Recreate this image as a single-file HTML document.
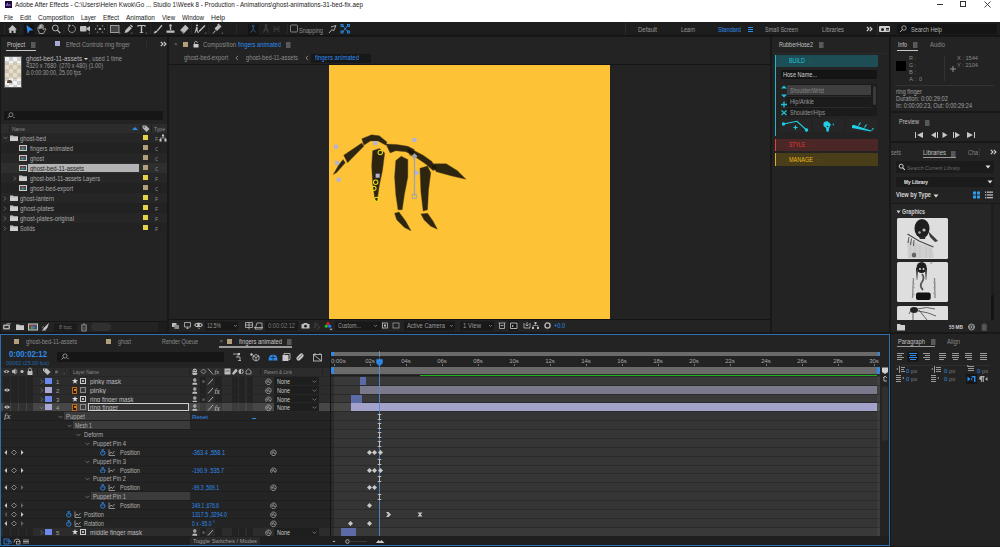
<!DOCTYPE html>
<html><head><meta charset="utf-8">
<style>
*{margin:0;padding:0;box-sizing:border-box}
html,body{width:1000px;height:547px;overflow:hidden;background:#181818;font-family:"Liberation Sans",sans-serif;color:#a8a8a8;font-size:7px}
.a{position:absolute}
.t{position:absolute;white-space:nowrap;line-height:1}
.pn{position:absolute;background:#232323}
.blue{color:#2d8ceb}
</style></head><body>
<!-- title bar -->
<div class="a" style="left:0;top:0;width:1000px;height:22px;background:#fff"></div>
<div class="a" style="left:5px;top:1px;width:7px;height:7px;background:#1f0a3e"></div>
<div class="t" style="left:6px;top:3px;font-size:4px;color:#b69cff">Ae</div>
<div class="t f" style="left:15px;top:1px;width:348px;font-size:7px;color:#1a1a1a">Adobe After Effects - C:\Users\Helen Kwok\Go ... Studio 1\Week 8 - Production - Animations\ghost-animations-31-bed-fix.aep</div>
<div class="a" style="left:937px;top:4px;width:6px;height:1px;background:#333"></div>
<div class="a" style="left:960px;top:1px;width:6px;height:6px;border:1px solid #333"></div>
<svg class="a" style="left:984px;top:1px" width="7" height="7"><path d="M0.5 0.5L6.5 6.5M6.5 0.5L0.5 6.5" stroke="#333" stroke-width="0.9"/></svg>
<div class="t f" style="left:4px;top:13.5px;width:9px;font-size:7px;color:#1a1a1a">File</div>
<div class="t f" style="left:20px;top:13.5px;width:11px;font-size:7px;color:#1a1a1a">Edit</div>
<div class="t f" style="left:38px;top:13.5px;width:36px;font-size:7px;color:#1a1a1a">Composition</div>
<div class="t f" style="left:81px;top:13.5px;width:15px;font-size:7px;color:#1a1a1a">Layer</div>
<div class="t f" style="left:103px;top:13.5px;width:16px;font-size:7px;color:#1a1a1a">Effect</div>
<div class="t f" style="left:126px;top:13.5px;width:29px;font-size:7px;color:#1a1a1a">Animation</div>
<div class="t f" style="left:162px;top:13.5px;width:13px;font-size:7px;color:#1a1a1a">View</div>
<div class="t f" style="left:182px;top:13.5px;width:22px;font-size:7px;color:#1a1a1a">Window</div>
<div class="t f" style="left:211px;top:13.5px;width:14px;font-size:7px;color:#1a1a1a">Help</div>
<!-- toolbar -->
<div class="a" style="left:0;top:22px;width:1000px;height:14px;background:#1d1d1d"></div>
<div class="a" style="left:0;top:35px;width:1000px;height:1px;background:#121212"></div>
<svg class="a" style="left:0;top:22px" width="400" height="14" fill="#bdbdbd" stroke="none">
<g fill="#2e2e2e"><rect x="4" y="2" width="0.7" height="10"/><rect x="20.5" y="2" width="0.7" height="10"/><rect x="63.5" y="2" width="0.7" height="10"/><rect x="107" y="2" width="0.7" height="10"/><rect x="150.5" y="2" width="0.7" height="10"/><rect x="191" y="2" width="0.7" height="10"/><rect x="208.5" y="2" width="0.7" height="10"/><rect x="236" y="2" width="0.7" height="10"/><rect x="287" y="2" width="0.7" height="10"/></g>
<path d="M8 7.5L12.5 3L17 7.5H15.7V11H13.5V8.7H11.5V11H9.3V7.5Z"/>
<rect x="24" y="2" width="10" height="11" fill="#141414"/>
<path d="M26.5 3L33.5 8.2L29.8 8.6L27.6 11.8Z" fill="#2d8ceb"/>
<path d="M38 7.5V5.2Q38.5 4.4 39.3 5.2V7V3.3Q39.8 2.5 40.6 3.3V6.5V2.6Q41.1 1.9 41.9 2.6V6.5V3.2Q42.4 2.5 43.2 3.2V7.8L44.6 6.6Q45.6 6.1 46 7L43.4 11.5H39.5Z" fill="none" stroke="#bdbdbd" stroke-width="0.8"/>
<circle cx="55.3" cy="6" r="2.9" fill="none" stroke="#bdbdbd" stroke-width="0.9"/><path d="M57.3 8.1L60.3 11.1" stroke="#bdbdbd" stroke-width="1.2"/>
<path d="M69.3 4.4A3.6 3.6 0 1 0 72 3.3" fill="none" stroke="#9a9a9a" stroke-width="0.9"/><path d="M68 2.5L71 3L69.3 5.6Z" fill="#9a9a9a"/>
<rect x="80" y="4" width="6.5" height="5.5" rx="1"/><path d="M86.5 6.2L90 4V9.5L86.5 7.3Z"/><path d="M88.5 11.5L89.7 10.3V11.5Z"/>
<g fill="#aaa"><path d="M96.5 3.5H98.5L97.5 4.8Z"/><path d="M101.5 3.5H103.5L102.5 4.8Z"/><path d="M96.5 10.5H98.5L97.5 9.2Z"/><path d="M101.5 10.5H103.5L102.5 9.2Z"/><rect x="98.8" y="6" width="2.4" height="2"/><path d="M95 6L96.5 7L95 8Z"/><path d="M105 6L103.5 7L105 8Z"/></g>
<rect x="110.5" y="3.5" width="8.5" height="7" fill="#444" stroke="#a8a8a8" stroke-width="0.9"/><path d="M119 11.5L120.2 10.3V11.5Z"/>
<path d="M124.5 11L125.5 8L129.5 4L131.8 6.3L127.8 10.3Z"/><path d="M130 3.5L131 2.5L133 4.5L132 5.5Z"/><path d="M131 11.5L132.2 10.3V11.5Z"/>
<path d="M137.5 3H145.5V5H144.8L144.3 4H142.2V10.3H143.3V11H139.7V10.3H140.8V4H138.7L138.2 5H137.5Z"/><path d="M145.5 11.5L146.7 10.3V11.5Z"/>
<path d="M153.5 11.5L154.5 9.5L156.5 8.5L157.5 9.5L156 11Z"/><path d="M156.8 8.2L161.5 2.8L162.5 3.8L157.8 9.2Z"/>
<circle cx="170.5" cy="3.5" r="1.3"/><rect x="169.8" y="4.5" width="1.4" height="3.5"/><path d="M166.5 8.5H174.5V10.8H166.5Z"/>
<path d="M180 8.2L185.3 2.8L188.8 6.3L183.5 11.7Z"/><path d="M180.8 8.3L183.4 10.9" stroke="#1e1e1e" stroke-width="0.6"/>
<circle cx="197" cy="3.5" r="1.1"/><path d="M196 5L198 5.5L197.5 8L199 11H197.8L196.3 8.5L195.3 11H194.5L195.5 7.5Z"/><path d="M198.5 9L204.5 3L205.5 4L199.5 10Z"/><path d="M205 11.5L206.2 10.3V11.5Z"/>
<path d="M213 11.5L215.5 8.5" stroke="#bdbdbd" stroke-width="1"/><path d="M214.5 6.5L218 3L220.5 5.5L217 9Z"/><path d="M217.3 2.5L218.5 1.5L221.5 4.5L220.5 5.7Z"/><path d="M221.5 11.5L222.7 10.3V11.5Z"/>
<rect x="248" y="2" width="10.5" height="11" fill="#141414"/>
<g fill="none" stroke="#2f5f90" stroke-width="0.9"><circle cx="253.2" cy="4" r="1"/><path d="M253.2 5V8L250.2 10.5M253.2 8L256.2 10.5"/></g>
<g fill="none" stroke="#474747" stroke-width="0.9"><circle cx="266" cy="3.3" r="0.9"/><path d="M266 4.2L263.5 10.5M266 4.2L268.5 10.5M264.5 8H267.5"/><path d="M273.5 4L279.5 10M273.5 10L279.5 4M273 7H275M278 7H280"/></g>
<rect x="290.5" y="3" width="7" height="7" rx="1" fill="none" stroke="#8a8a8a" stroke-width="0.9"/>
<path d="M329 11L332 7.5L333.5 9L336 3.5L331 5" fill="none" stroke="#bdbdbd" stroke-width="0.9"/>
<g fill="none" stroke="#2d8ceb" stroke-width="0.9"><path d="M342.5 3.5L348 10M348 3.5L342.5 10"/><rect x="341" y="2.5" width="2" height="2"/><rect x="347.5" y="2.5" width="2" height="2"/><rect x="341" y="9" width="2" height="2"/><rect x="347.5" y="9" width="2" height="2"/></g>
</svg>
<div class="t f" style="left:299px;top:26.5px;width:24px;font-size:7px;color:#8f8f8f">Snapping</div>
<div class="a" style="left:625px;top:23px;width:1px;height:12px;background:#2c2c2c"></div>
<div class="t f" style="left:638px;top:26.5px;width:19px;font-size:6.5px;color:#9a9a9a">Default</div>
<div class="t f" style="left:681px;top:26.5px;width:14px;font-size:6.5px;color:#9a9a9a">Learn</div>
<div class="t f" style="left:718px;top:26.5px;width:23px;font-size:6.5px;color:#2d8ceb">Standard</div>
<div class="a" style="left:748px;top:27px;width:5px;height:1px;background:#2d8ceb;box-shadow:0 2px 0 #2d8ceb,0 4px 0 #2d8ceb"></div>
<div class="t f" style="left:765px;top:26.5px;width:33px;font-size:6.5px;color:#9a9a9a">Small Screen</div>
<div class="t f" style="left:822px;top:26.5px;width:22px;font-size:6.5px;color:#9a9a9a">Libraries</div>
<svg class="a" style="left:866px;top:26px" width="7" height="6"><path d="M0.8 0.8L3 3L0.8 5.2M3.8 0.8L6 3L3.8 5.2" fill="none" stroke="#d8d8d8" stroke-width="1.1"/></svg>
<div class="a" style="left:877px;top:23px;width:1px;height:12px;background:#2c2c2c"></div>
<div class="a" style="left:879px;top:26px;width:11px;height:6px;background:#cfcfcf;border-radius:1px"></div>
<div class="a" style="left:881px;top:27.5px;width:3px;height:3px;background:#1d1d1d;border-radius:50%"></div>
<div class="a" style="left:886px;top:28px;width:3px;height:1px;background:#1d1d1d;box-shadow:0 1.5px 0 #1d1d1d"></div>
<div class="a" style="left:897px;top:24px;width:100px;height:10px;background:#141414;border-radius:1px"></div>
<svg class="a" style="left:899px;top:25px" width="8" height="8"><circle cx="5" cy="3" r="2.2" fill="none" stroke="#bbb" stroke-width="0.8"/><path d="M3.5 4.5L1 7" stroke="#bbb" stroke-width="0.9"/></svg>
<div class="t f" style="left:911px;top:26.5px;width:31px;font-size:6.5px;color:#b5b5b5">Search Help</div>
<!-- panels -->
<div class="pn" style="left:1px;top:37px;width:166px;height:295px"></div>
<div class="pn" style="left:169px;top:37px;width:601px;height:295px"></div>
<div class="pn" style="left:772px;top:37px;width:117px;height:295px"></div>
<div class="pn" style="left:891px;top:37px;width:109px;height:74px"></div>
<div class="pn" style="left:891px;top:113px;width:109px;height:28px"></div>
<div class="pn" style="left:891px;top:143px;width:109px;height:189px"></div>
<div class="pn" style="left:0;top:334px;width:890px;height:212px;border:1px solid #2f6fb0"></div>
<div class="pn" style="left:891px;top:334px;width:109px;height:212px"></div>

<!-- project panel -->
<div class="t f" style="left:7px;top:41.5px;width:18px;font-size:6.5px;color:#c8c8c8">Project</div>
<svg class="a" style="left:31px;top:41.5px" width="5" height="6"><path d="M0 1H4.5M0 3H4.5M0 5H4.5" stroke="#aaa" stroke-width="0.8"/></svg>
<div class="a" style="left:6px;top:50px;width:30px;height:1px;background:#c8c8c8"></div>
<div class="a" style="left:55px;top:41px;width:5px;height:5px;background:#a9a9d6"></div>
<div class="t f" style="left:66px;top:41.5px;width:64px;font-size:6.5px;color:#8c8c8c">Effect Controls ring finger</div>
<div class="a" style="left:146px;top:40px;width:1px;height:9px;background:#2e2e2e"></div>
<svg class="a" style="left:160px;top:41px" width="7" height="6"><path d="M0.8 0.8L3 3L0.8 5.2M3.8 0.8L6 3L3.8 5.2" fill="none" stroke="#d0d0d0" stroke-width="1.1"/></svg>
<div class="a" style="left:4px;top:56px;width:18px;height:32px;background-color:#f2f2f2;background-image:linear-gradient(45deg,#cfcfcf 25%,transparent 25%,transparent 75%,#cfcfcf 75%),linear-gradient(45deg,#cfcfcf 25%,transparent 25%,transparent 75%,#cfcfcf 75%);background-size:8px 8px;background-position:0 0,4px 4px;border:1px solid #555"></div>
<div class="a" style="left:5px;top:63px;width:16px;height:16px;background:rgba(200,170,110,0.3)"></div>
<div class="a" style="left:7px;top:80px;width:5px;height:3px;background:#5a4a33;border-radius:2px 2px 0 0"></div>
<div class="t f" style="left:26px;top:56px;width:56px;font-size:6.5px;color:#bcbcbc">ghost-bed-11-assets</div>
<div class="a" style="left:84px;top:58px;width:0;height:0;border-left:2px solid transparent;border-right:2px solid transparent;border-top:2.5px solid #ddd"></div>
<div class="t f" style="left:89px;top:56px;width:33px;font-size:6.5px;color:#9a9a9a">, used 1 time</div>
<div class="t f" style="left:26px;top:63px;width:77px;font-size:6.5px;color:#9a9a9a">4320 x 7680&nbsp;&nbsp;(270 x 480) (1.00)</div>
<div class="t f" style="left:26px;top:70px;width:55px;font-size:6.5px;color:#9a9a9a">&Delta; 0:00:30:00, 25.00 fps</div>
<div class="a" style="left:4px;top:111px;width:159px;height:9px;background:#161616;border-radius:1px"></div>
<svg class="a" style="left:6px;top:112px" width="10" height="7"><circle cx="5" cy="2.7" r="2" fill="none" stroke="#aaa" stroke-width="0.7"/><path d="M3.6 4.1L1.5 6.2" stroke="#aaa" stroke-width="0.8"/><path d="M7 5L9 5L8 6Z" fill="#aaa"/></svg>
<div class="a" style="left:1px;top:124px;width:166px;height:9px;background:#2c2c2c"></div>
<div class="a" style="left:9px;top:125px;width:1px;height:7px;background:#1e1e1e"></div>
<div class="t f" style="left:12px;top:126px;width:13px;font-size:6px;color:#8a8a8a">Name</div>
<div class="a" style="left:132px;top:127px;width:0;height:0;border-left:3px solid transparent;border-right:3px solid transparent;border-bottom:3px solid #2d8ceb"></div>
<div class="a" style="left:140px;top:125px;width:1px;height:7px;background:#1e1e1e"></div>
<svg class="a" style="left:142px;top:125px" width="8" height="7"><path d="M0.5 0.5H4L7.5 4L4.5 7L0.5 3Z" fill="#b5b5b5"/><circle cx="2.2" cy="2" r="0.7" fill="#2c2c2c"/></svg>
<div class="a" style="left:151px;top:125px;width:1px;height:7px;background:#1e1e1e"></div>
<div class="t f" style="left:154px;top:126px;width:11px;font-size:6px;color:#8a8a8a">Type</div>
<div class="a" style="left:1px;top:133px;width:166px;height:10px;background:#262626"></div>
<svg class="a" style="left:3px;top:136px" width="5" height="4"><path d="M0.5 0.8L2.5 2.8L4.5 0.8" fill="none" stroke="#888" stroke-width="0.7"/></svg>
<svg class="a" style="left:10px;top:135px" width="8" height="6"><path d="M0 0.5H3L3.8 1.3H8V6H0Z" fill="#cfcfcf"/><path d="M0 1.8H8" stroke="#9a9a9a" stroke-width="0.4"/></svg>
<div class="t f" style="left:20px;top:135.5px;width:26px;font-size:6.5px;color:#a9a9a9">ghost-bed</div>
<div class="a" style="left:143px;top:135px;width:5px;height:5px;background:#e3d34a"></div>
<div class="a" style="left:155px;top:135.5px;width:3px;height:7px;overflow:hidden"><div class="t" style="left:0;top:0;font-size:6px;color:#888">F</div></div>
<div class="a" style="left:1px;top:143px;width:166px;height:10px;background:#222222"></div>
<svg class="a" style="left:19px;top:145px" width="8" height="6"><rect x="0" y="0" width="8" height="6" fill="#c9c9c9"/><rect x="1" y="1" width="6" height="4" fill="#4a4a4a"/><circle cx="3.4" cy="2.6" r="1.1" fill="#d03030"/><circle cx="4.8" cy="3.4" r="1.1" fill="#3070e0"/><circle cx="3.2" cy="3.8" r="1" fill="#30b040"/></svg>
<div class="t f" style="left:30px;top:145.5px;width:43px;font-size:6.5px;color:#a9a9a9">fingers animated</div>
<div class="a" style="left:143px;top:145px;width:5px;height:5px;background:#b39f7c"></div>
<div class="a" style="left:155px;top:145.5px;width:3px;height:7px;overflow:hidden"><div class="t" style="left:0;top:0;font-size:6px;color:#888">C</div></div>
<div class="a" style="left:1px;top:153px;width:166px;height:10px;background:#262626"></div>
<svg class="a" style="left:19px;top:155px" width="8" height="6"><rect x="0" y="0" width="8" height="6" fill="#c9c9c9"/><rect x="1" y="1" width="6" height="4" fill="#4a4a4a"/><circle cx="3.4" cy="2.6" r="1.1" fill="#d03030"/><circle cx="4.8" cy="3.4" r="1.1" fill="#3070e0"/><circle cx="3.2" cy="3.8" r="1" fill="#30b040"/></svg>
<div class="t f" style="left:30px;top:155.5px;width:14px;font-size:6.5px;color:#a9a9a9">ghost</div>
<div class="a" style="left:143px;top:155px;width:5px;height:5px;background:#b39f7c"></div>
<div class="a" style="left:155px;top:155.5px;width:3px;height:7px;overflow:hidden"><div class="t" style="left:0;top:0;font-size:6px;color:#888">C</div></div>
<div class="a" style="left:1px;top:163px;width:166px;height:10px;background:#2e2e2e"></div>
<svg class="a" style="left:19px;top:165px" width="8" height="6"><rect x="0" y="0" width="8" height="6" fill="#c9c9c9"/><rect x="1" y="1" width="6" height="4" fill="#4a4a4a"/><circle cx="3.4" cy="2.6" r="1.1" fill="#d03030"/><circle cx="4.8" cy="3.4" r="1.1" fill="#3070e0"/><circle cx="3.2" cy="3.8" r="1" fill="#30b040"/></svg>
<div class="a" style="left:28px;top:164px;width:111px;height:8px;background:#b3b3b3"></div>
<div class="t f" style="left:30px;top:165.5px;width:54px;font-size:6.5px;color:#1a1a1a">ghost-bed-11-assets</div>
<div class="a" style="left:143px;top:165px;width:5px;height:5px;background:#b39f7c"></div>
<div class="a" style="left:155px;top:165.5px;width:3px;height:7px;overflow:hidden"><div class="t" style="left:0;top:0;font-size:6px;color:#888">C</div></div>
<div class="a" style="left:1px;top:173px;width:166px;height:10px;background:#262626"></div>
<svg class="a" style="left:13px;top:176px" width="4" height="5"><path d="M0.8 0.5L2.8 2.5L0.8 4.5" fill="none" stroke="#888" stroke-width="0.7"/></svg>
<svg class="a" style="left:19px;top:175px" width="8" height="6"><path d="M0 0.5H3L3.8 1.3H8V6H0Z" fill="#cfcfcf"/><path d="M0 1.8H8" stroke="#9a9a9a" stroke-width="0.4"/></svg>
<div class="t f" style="left:30px;top:175.5px;width:70px;font-size:6.5px;color:#a9a9a9">ghost-bed-11-assets Layers</div>
<div class="a" style="left:143px;top:175px;width:5px;height:5px;background:#e3d34a"></div>
<div class="a" style="left:155px;top:175.5px;width:3px;height:7px;overflow:hidden"><div class="t" style="left:0;top:0;font-size:6px;color:#888">F</div></div>
<div class="a" style="left:1px;top:183px;width:166px;height:10px;background:#222222"></div>
<svg class="a" style="left:19px;top:185px" width="8" height="6"><rect x="0" y="0" width="8" height="6" fill="#c9c9c9"/><rect x="1" y="1" width="6" height="4" fill="#4a4a4a"/><circle cx="3.4" cy="2.6" r="1.1" fill="#d03030"/><circle cx="4.8" cy="3.4" r="1.1" fill="#3070e0"/><circle cx="3.2" cy="3.8" r="1" fill="#30b040"/></svg>
<div class="t f" style="left:30px;top:185.5px;width:43px;font-size:6.5px;color:#a9a9a9">ghost-bed-export</div>
<div class="a" style="left:143px;top:185px;width:5px;height:5px;background:#b39f7c"></div>
<div class="a" style="left:155px;top:185.5px;width:3px;height:7px;overflow:hidden"><div class="t" style="left:0;top:0;font-size:6px;color:#888">C</div></div>
<div class="a" style="left:1px;top:193px;width:166px;height:10px;background:#262626"></div>
<svg class="a" style="left:3px;top:196px" width="4" height="5"><path d="M0.8 0.5L2.8 2.5L0.8 4.5" fill="none" stroke="#888" stroke-width="0.7"/></svg>
<svg class="a" style="left:10px;top:195px" width="8" height="6"><path d="M0 0.5H3L3.8 1.3H8V6H0Z" fill="#cfcfcf"/><path d="M0 1.8H8" stroke="#9a9a9a" stroke-width="0.4"/></svg>
<div class="t f" style="left:20px;top:195.5px;width:34px;font-size:6.5px;color:#a9a9a9">ghost-lantern</div>
<div class="a" style="left:143px;top:195px;width:5px;height:5px;background:#e3d34a"></div>
<div class="a" style="left:155px;top:195.5px;width:3px;height:7px;overflow:hidden"><div class="t" style="left:0;top:0;font-size:6px;color:#888">F</div></div>
<div class="a" style="left:1px;top:203px;width:166px;height:10px;background:#222222"></div>
<svg class="a" style="left:3px;top:206px" width="4" height="5"><path d="M0.8 0.5L2.8 2.5L0.8 4.5" fill="none" stroke="#888" stroke-width="0.7"/></svg>
<svg class="a" style="left:10px;top:205px" width="8" height="6"><path d="M0 0.5H3L3.8 1.3H8V6H0Z" fill="#cfcfcf"/><path d="M0 1.8H8" stroke="#9a9a9a" stroke-width="0.4"/></svg>
<div class="t f" style="left:20px;top:205.5px;width:34px;font-size:6.5px;color:#a9a9a9">ghost-plates</div>
<div class="a" style="left:143px;top:205px;width:5px;height:5px;background:#e3d34a"></div>
<div class="a" style="left:155px;top:205.5px;width:3px;height:7px;overflow:hidden"><div class="t" style="left:0;top:0;font-size:6px;color:#888">F</div></div>
<div class="a" style="left:1px;top:213px;width:166px;height:10px;background:#262626"></div>
<svg class="a" style="left:3px;top:216px" width="4" height="5"><path d="M0.8 0.5L2.8 2.5L0.8 4.5" fill="none" stroke="#888" stroke-width="0.7"/></svg>
<svg class="a" style="left:10px;top:215px" width="8" height="6"><path d="M0 0.5H3L3.8 1.3H8V6H0Z" fill="#cfcfcf"/><path d="M0 1.8H8" stroke="#9a9a9a" stroke-width="0.4"/></svg>
<div class="t f" style="left:20px;top:215.5px;width:54px;font-size:6.5px;color:#a9a9a9">ghost-plates-original</div>
<div class="a" style="left:143px;top:215px;width:5px;height:5px;background:#e3d34a"></div>
<div class="a" style="left:155px;top:215.5px;width:3px;height:7px;overflow:hidden"><div class="t" style="left:0;top:0;font-size:6px;color:#888">F</div></div>
<div class="a" style="left:1px;top:223px;width:166px;height:10px;background:#222222"></div>
<svg class="a" style="left:3px;top:226px" width="4" height="5"><path d="M0.8 0.5L2.8 2.5L0.8 4.5" fill="none" stroke="#888" stroke-width="0.7"/></svg>
<svg class="a" style="left:10px;top:225px" width="8" height="6"><path d="M0 0.5H3L3.8 1.3H8V6H0Z" fill="#cfcfcf"/><path d="M0 1.8H8" stroke="#9a9a9a" stroke-width="0.4"/></svg>
<div class="t f" style="left:20px;top:225.5px;width:15px;font-size:6.5px;color:#a9a9a9">Solids</div>
<div class="a" style="left:143px;top:225px;width:5px;height:5px;background:#e3d34a"></div>
<div class="a" style="left:155px;top:225.5px;width:3px;height:7px;overflow:hidden"><div class="t" style="left:0;top:0;font-size:6px;color:#888">F</div></div>
<svg class="a" style="left:159px;top:134px" width="8" height="8"><rect x="3" y="0.5" width="2" height="2" fill="#ccc"/><rect x="0.5" y="5" width="2" height="2.5" fill="#ccc"/><rect x="5.5" y="5" width="2" height="2.5" fill="#ccc"/><path d="M4 2.5V4M1.5 5V4H6.5V5" stroke="#ccc" stroke-width="0.6" fill="none"/></svg>
<div class="a" style="left:1px;top:321px;width:166px;height:1px;background:#151515"></div>
<svg class="a" style="left:0;top:322px" width="170" height="10"><rect x="3" y="2.5" width="7" height="5" rx="1" fill="#aaa"/><rect x="4.5" y="4" width="4" height="2" fill="#333"/><path d="M6 2.5Q8 0.5 11 2" stroke="#aaa" fill="none" stroke-width="0.8"/><path d="M16 2.5H19L20 3.3H24V8H16Z" fill="#c9c9c9"/><rect x="28" y="1.5" width="10" height="7" fill="#c9c9c9"/><rect x="29" y="2.5" width="8" height="5" fill="#505050"/><circle cx="32" cy="4.3" r="1.3" fill="#d03030"/><circle cx="34" cy="5.2" r="1.3" fill="#3070e0"/><circle cx="31.8" cy="6" r="1.2" fill="#30b040"/><path d="M42.5 8.5L44 6L48.5 1.5L47 6L44.5 8Z M44 4.5L42 5.5M46 7L45 9" fill="#c9c9c9" stroke="#c9c9c9" stroke-width="0.5"/><rect x="54" y="1.5" width="23" height="8" fill="#1b1b1b"/><path d="M81 3H87M83 2H85M81.8 3.5V9H86.2V3.5" stroke="#aaa" fill="none" stroke-width="0.8"/><path d="M83 4.5V8M85 4.5V8" stroke="#aaa" stroke-width="0.5"/><rect x="91" y="1" width="20" height="8" rx="4" fill="#303030"/><rect x="158" y="0" width="9" height="10" fill="#1d1d1d"/></svg>
<div class="t f" style="left:59px;top:325px;width:13px;font-size:5.5px;color:#777">8 bpc</div>
<!-- comp yellow -->
<div class="a" style="left:329px;top:65px;width:281px;height:254px;background:#fec236"></div>
<!-- comp panel -->
<div class="t" style="left:174px;top:41px;font-size:6px;color:#777">&times;</div>
<div class="a" style="left:183px;top:42px;width:5px;height:5px;background:#b39f7c"></div>
<svg class="a" style="left:193px;top:41px" width="6" height="7"><path d="M1.5 3V1.8Q1.5 0.5 3 0.5Q4.5 0.5 4.5 1.8" fill="none" stroke="#ccc" stroke-width="0.7"/><rect x="0.5" y="3" width="5" height="3.5" fill="#ccc"/></svg>
<div class="t f" style="left:203px;top:41.5px;width:33px;font-size:6.5px;color:#8c8c8c">Composition</div>
<div class="t f" style="left:238px;top:41.5px;width:43px;font-size:6.5px;color:#2d8ceb">fingers animated</div>
<svg class="a" style="left:286px;top:41.5px" width="5" height="6"><path d="M0 1H4.5M0 3H4.5M0 5H4.5" stroke="#aaa" stroke-width="0.8"/></svg>
<div class="t f" style="left:184px;top:55px;width:44px;font-size:6.5px;color:#8c8c8c">ghost-bed-export</div>
<svg class="a" style="left:235px;top:55px" width="4" height="6"><path d="M3 0.8L1 3L3 5.2" fill="none" stroke="#9a9a9a" stroke-width="0.8"/></svg>
<div class="t f" style="left:246px;top:55px;width:52px;font-size:6.5px;color:#8c8c8c">ghost-bed-11-assets</div>
<svg class="a" style="left:305px;top:55px" width="4" height="6"><path d="M3 0.8L1 3L3 5.2" fill="none" stroke="#9a9a9a" stroke-width="0.8"/></svg>
<div class="a" style="left:311px;top:54px;width:60px;height:9px;background:#181818"></div>
<div class="t f" style="left:315px;top:55px;width:44px;font-size:6.5px;color:#2d8ceb">fingers animated</div>
<div class="a" style="left:169px;top:64px;width:601px;height:1px;background:#151515"></div>
<svg class="a" style="left:330px;top:125px" width="140" height="110" viewBox="0 0 696 547">
<defs><filter id="bl" x="-5%" y="-5%" width="110%" height="110%"><feGaussianBlur stdDeviation="2.5"/></filter></defs>
<g fill="#2e2511" stroke="#5a4519" stroke-width="4" stroke-opacity="0.5" stroke-linejoin="round">
<path d="M16 246L43 199L65 172L76 188L32 237Z"/>
<path d="M68 150L158 90L168 106L87 188Z"/>
<path d="M158 68L207 49L245 54L283 84L278 101L239 79L201 79L168 101Z"/>
<path d="M278 95L332 97L387 106L419 122L414 150L376 133L327 128L299 139Z"/>
<path d="M408 122L463 150L507 182L528 221L512 226L474 193L419 155Z"/>
<path d="M507 193L578 193L632 226L676 270L605 253L528 232Z"/>
<path d="M212 128L245 117L272 139L261 226L245 302L234 379L223 368L212 292L207 204Z"/>
<path d="M327 177L354 155L387 172L387 259L370 346L359 422L338 422L327 346L321 259Z"/>
<path d="M321 439L343 433L376 477L403 526L370 510L332 472Z"/>
<path d="M447 215L485 204L501 237L490 324L485 422L463 428L452 335Z"/>
<path d="M452 442L485 439L512 477L534 518L501 504L468 472Z"/>
</g>
<g fill="#0e0a04" opacity="0.6"><path d="M385 118L420 130L412 158L395 150Z"/><path d="M505 195L525 205L532 222L510 215Z"/></g>
<g fill="#b3b3d9"><rect x="20" y="98" width="20" height="20"/><rect x="25" y="178" width="20" height="20"/><rect x="33" y="262" width="20" height="20"/><rect x="215" y="80" width="20" height="20"/><rect x="227" y="242" width="20" height="20"/><rect x="410" y="65" width="20" height="20"/><rect x="420" y="228" width="20" height="20"/></g>
<path d="M420 155V352" stroke="#a5a5a5" stroke-width="7"/>
<path d="M420 140L435 155L420 170L405 155Z" fill="#a5a5a5"/>
<rect x="409" y="345" width="20" height="20" fill="none" stroke="#a5a5a5" stroke-width="5"/>
<g fill="none" stroke="#e4e414" stroke-width="5"><circle cx="250" cy="137" r="11"/><circle cx="227" cy="285" r="11"/><circle cx="218" cy="315" r="11"/><circle cx="232" cy="370" r="11"/></g>
<g fill="#33270f"><circle cx="250" cy="137" r="4"/></g>
</svg>
<div class="a" style="left:169px;top:319px;width:601px;height:1px;background:#141414"></div>
<svg class="a" style="left:169px;top:320px" width="601" height="12">
<g fill="#bdbdbd" stroke="none">
<rect x="3" y="3" width="4.5" height="4" fill="#bdbdbd"/><rect x="5.5" y="5" width="4.5" height="4" fill="#8a8a8a"/>
<path d="M15.5 2.5H21.5V7H15.5Z M17.5 8.5H19.5M18.5 7V8.5" fill="none" stroke="#bdbdbd" stroke-width="0.8"/>
<path d="M25.5 4Q29.5 1.5 33.5 4V6Q29.5 8.5 25.5 6Z"/><circle cx="27.5" cy="5" r="0.9" fill="#1f1f1f"/><circle cx="31.5" cy="5" r="0.9" fill="#1f1f1f"/><path d="M29 8L30 9L31 8Z"/>
<rect x="36" y="1.5" width="33" height="9" fill="#181818"/>
<path d="M65 5L66.5 6.5L68 5" fill="none" stroke="#999" stroke-width="0.7"/>
<path d="M76.5 2.5H83.5V7.5H76.5Z M80 2.5V7.5M76.5 5H83.5" fill="none" stroke="#bdbdbd" stroke-width="0.8"/><path d="M79 8.5L80 9.5L81 8.5Z"/>
<path d="M86 9L88 3H93V9Z M85 7.5H94" fill="none" stroke="#bdbdbd" stroke-width="0.8"/>
<rect x="96" y="1.5" width="33" height="9" fill="#181818"/>
<path d="M132.5 4H134L135 3H138L139 4H140.5V8.5H132.5Z"/><circle cx="136.5" cy="6.2" r="1.4" fill="#1f1f1f"/>
<path d="M145 8L149 3.5M146 5.5Q145 3 147.5 3M148.5 8.5Q151 8.5 150 6" fill="none" stroke="#4c4c4c" stroke-width="0.9"/>
<circle cx="159" cy="3.6" r="1.6" fill="#e02020"/><circle cx="157.3" cy="6.2" r="1.6" fill="#20c020"/><circle cx="160.7" cy="6.2" r="1.6" fill="#3070ff"/><path d="M160.5 8.8L162 10.2L163.5 8.8Z" fill="#ccc"/>
<rect x="166" y="1.5" width="46" height="9" fill="#181818"/>
<path d="M205 5L206.5 6.5L208 5" fill="none" stroke="#999" stroke-width="0.7"/>
<rect x="213.5" y="3" width="5" height="5" fill="none" stroke="#bdbdbd" stroke-width="0.8"/><rect x="215" y="4.5" width="2" height="2"/>
<rect x="224" y="3" width="6" height="5" fill="none" stroke="#9a9a9a" stroke-width="0.8"/>
<rect x="235" y="1.5" width="51" height="9" fill="#181818"/>
<path d="M281 5L282.5 6.5L284 5" fill="none" stroke="#999" stroke-width="0.7"/>
<rect x="291" y="1.5" width="34" height="9" fill="#181818"/>
<path d="M320 5L321.5 6.5L323 5" fill="none" stroke="#999" stroke-width="0.7"/>
<path d="M329.5 3H336.5M330.5 3V8.5H335.5V3M331.5 5.5H334.5" fill="none" stroke="#bdbdbd" stroke-width="0.8"/>
<rect x="340" y="1" width="9" height="10" fill="#161616"/>
<path d="M341.5 3H348V8.5H341.5Z" fill="none" stroke="#d0d0d0" stroke-width="0.8"/><path d="M343 5L345 6L343 7Z" fill="#d0d0d0"/>
<path d="M355 3V8H361V3M358 2V6M356.5 4.5L358 6L359.5 4.5" fill="none" stroke="#bdbdbd" stroke-width="0.8"/>
<rect x="365.5" y="2" width="2" height="2"/><rect x="363" y="7" width="2" height="2"/><rect x="368" y="7" width="2" height="2"/><path d="M366.5 4V5.5M364 7V5.5H369V7" fill="none" stroke="#bdbdbd" stroke-width="0.6"/>
<circle cx="378.5" cy="5.5" r="2.6" fill="none" stroke="#bdbdbd" stroke-width="1.3"/>
</g></svg>
<div class="t f" style="left:207px;top:323px;width:14px;font-size:6.5px;color:#9a9a9a">12.5%</div>
<div class="t f" style="left:268px;top:323px;width:27px;font-size:6.5px;color:#7a7a7a">0:00:02:12</div>
<div class="t f" style="left:338px;top:323px;width:23px;font-size:6.5px;color:#9a9a9a">Custom...</div>
<div class="t f" style="left:407px;top:323px;width:38px;font-size:6.5px;color:#9a9a9a">Active Camera</div>
<div class="t f" style="left:463px;top:323px;width:18px;font-size:6.5px;color:#9a9a9a">1 View</div>
<div class="t f" style="left:554px;top:323px;width:11px;font-size:6.5px;color:#2d8ceb">+0.0</div>

<!-- timeline -->
<div class="a" style="left:14px;top:339px;width:5px;height:5px;background:#b39f7c"></div>
<div class="t f" style="left:26px;top:338.5px;width:51px;font-size:6.5px;color:#8a8a8a">ghost-bed-11-assets</div>
<div class="a" style="left:106px;top:339px;width:5px;height:5px;background:#b39f7c"></div>
<div class="t f" style="left:118px;top:338.5px;width:13px;font-size:6.5px;color:#8a8a8a">ghost</div>
<div class="t f" style="left:162px;top:338.5px;width:36px;font-size:6.5px;color:#8a8a8a">Render Queue</div>
<div class="t" style="left:219.5px;top:338px;font-size:6px;color:#888">&times;</div>
<div class="a" style="left:227px;top:339px;width:5px;height:5px;background:#b39f7c"></div>
<div class="t f" style="left:239px;top:338.5px;width:43px;font-size:6.5px;color:#c8c8c8">fingers animated</div>
<svg class="a" style="left:287px;top:338.5px" width="5" height="6"><path d="M0 1H4.5M0 3H4.5M0 5H4.5" stroke="#aaa" stroke-width="0.8"/></svg>
<div class="a" style="left:219px;top:346px;width:73px;height:1.5px;background:#9a9a9a"></div>
<div class="t f" style="left:9px;top:349px;width:38px;font-size:9.5px;color:#2d8ceb;font-weight:bold">0:00:02:12</div>
<div class="t f" style="left:6px;top:359.5px;width:43px;font-size:6px;color:#2268b0">00062 (25.00 fps)</div>
<div class="a" style="left:57px;top:352px;width:167px;height:10px;background:#161616"></div>
<svg class="a" style="left:60px;top:353px" width="10" height="8"><circle cx="5" cy="3" r="2.1" fill="none" stroke="#bbb" stroke-width="0.7"/><path d="M3.5 4.5L1.5 6.5" stroke="#bbb" stroke-width="0.8"/><path d="M7 5.3H9L8 6.3Z" fill="#bbb"/></svg>
<svg class="a" style="left:230px;top:351px" width="100" height="12" fill="none" stroke="#c8c8c8" stroke-width="0.8">
<path d="M3 3H8M8 3V6M6 6H10M10 6V9.5M8 9.5H11"/><rect x="8" y="2" width="2" height="2" fill="#c8c8c8" stroke="none"/>
<path d="M23 5L26 3.5L29 5V8.5L26 10L23 8.5Z M23 5L26 6.5L29 5M26 6.5V10"/><circle cx="21.5" cy="3.5" r="1.2" fill="#c8c8c8" stroke="none"/>
<path d="M38.5 9.5Q38.5 3.5 43 3.5Q47.5 3.5 47.5 9.5Z" fill="#2d8ceb" stroke="none"/><path d="M43 3.5V9.5M40.5 6.5H45.5" stroke="#1a1a1a" stroke-width="0.7"/>
<rect x="52.5" y="4" width="6" height="6" fill="#c8c8c8" stroke="none"/><path d="M54 4V2.5H60V8.5H58.5" />
<path d="M67 9Q65.5 7.5 67 6L70 3Q71.5 1.5 73 3Q74.5 4.5 73 6L70 9Q68.5 10.5 67 9Z" fill="#c8c8c8" stroke="none"/><path d="M67.5 8L72.5 3.5" stroke="#1a1a1a" stroke-width="0.6"/>
<rect x="83.5" y="3.5" width="8" height="6.5"/><path d="M83.5 3.5L91.5 10M85 2V3.5M90 2V3.5"/>
</svg>
<div class="a" style="left:1px;top:367.5px;width:888px;height:8.5px;background:#2c2c2c"></div>
<svg class="a" style="left:0;top:367px" width="330" height="9" fill="#bdbdbd">
<path d="M3.5 4.5Q6.5 1.5 9.5 4.5Q6.5 7.5 3.5 4.5Z"/><circle cx="6.5" cy="4.5" r="1" fill="#2c2c2c"/>
<path d="M12 3.3H13.3L15.5 1.5V7.5L13.3 5.7H12Z"/><path d="M16.3 2.5Q17.5 4.5 16.3 6.5" fill="none" stroke="#bdbdbd" stroke-width="0.6"/>
<circle cx="22" cy="4.5" r="1.6"/>
<path d="M28.5 4V2.8Q28.5 1 30 1Q31.5 1 31.5 2.8V4" fill="none" stroke="#bdbdbd" stroke-width="0.7"/><rect x="27.5" y="4" width="5" height="4"/>
<rect x="37" y="1.5" width="0.7" height="6" fill="#1b1b1b"/>
<path d="M43 1.5H47L50.5 5L47.5 8L43 3.5Z"/><circle cx="44.5" cy="2.8" r="0.6" fill="#2c2c2c"/>
<rect x="53" y="1.5" width="0.7" height="6" fill="#1b1b1b"/>
<text x="55" y="6.5" font-size="5" fill="#888" font-family="Liberation Sans">#</text>
<rect x="63.5" y="6" width="1.2" height="0.7" fill="#888"/>
<rect x="70" y="1.5" width="0.7" height="6" fill="#1b1b1b"/>
<rect x="189" y="1.5" width="0.7" height="6" fill="#1b1b1b"/>
<g transform="translate(192,1)"><path d="M0.5 3Q0.5 0.5 2.8 0.5Q5 0.5 5 3V4.5H0.5Z M0 5H5.5L4.5 7H1Z"/><circle cx="2" cy="2.5" r="0.6" fill="#2c2c2c"/><circle cx="3.5" cy="2.5" r="0.6" fill="#2c2c2c"/></g>
<path d="M203.5 2L206 4.5L203.5 7L201 4.5Z" fill="none" stroke="#bdbdbd" stroke-width="0.7"/>
<path d="M208 1.5L213 7.5" stroke="#bdbdbd" stroke-width="0.8"/>
<text x="214.5" y="7" font-size="6.5" font-style="italic" fill="#bdbdbd" font-family="Liberation Serif">fx</text>
<rect x="224.5" y="1.5" width="6" height="6" fill="#bdbdbd"/><path d="M225.5 4H229.5" stroke="#2c2c2c" stroke-width="0.6"/>
<path d="M232 6.5L235 2.5Q236 1.5 237 2.5Q238 3.5 237 4.5L234 7.5Q233 8 232 6.5Z" fill="#bdbdbd"/>
<circle cx="241" cy="4.5" r="2.5"/><path d="M241 2L243 4.5L241 7Z" fill="#2c2c2c"/>
<path d="M246 4L248.5 2L251 4V7H246Z" fill="none" stroke="#bdbdbd" stroke-width="0.7"/>
<rect x="260" y="1.5" width="0.7" height="6" fill="#1b1b1b"/>
<rect x="322" y="1.5" width="0.7" height="6" fill="#1b1b1b"/>
</svg>
<div class="t f" style="left:73px;top:369.5px;width:26px;font-size:5.5px;color:#8a8a8a">Layer Name</div>
<div class="t f" style="left:264px;top:369.5px;width:28px;font-size:5.5px;color:#8a8a8a">Parent &amp; Link</div>
<div class="a" style="left:1px;top:377px;width:329px;height:8px;background:#2c2c2c"></div>
<div class="a" style="left:334px;top:377px;width:546px;height:8px;background:#393939"></div>
<div class="a" style="left:331px;top:377px;width:3px;height:8px;background:#2e2e2e"></div>
<div class="a" style="left:3px;top:377px;width:7px;height:8px;background:#232323"></div>
<div class="a" style="left:11px;top:377px;width:7px;height:8px;background:#232323"></div>
<div class="a" style="left:19px;top:377px;width:7px;height:8px;background:#232323"></div>
<div class="a" style="left:27px;top:377px;width:6px;height:8px;background:#232323"></div>
<div class="a" style="left:231.5px;top:377px;width:6px;height:8px;background:#222222"></div>
<div class="a" style="left:238.5px;top:377px;width:6.5px;height:8px;background:#222222"></div>
<div class="a" style="left:247px;top:377px;width:5.5px;height:8px;background:#222222"></div>
<div class="a" style="left:200px;top:377px;width:6px;height:8px;background:#222222"></div>
<div class="a" style="left:215px;top:377px;width:7px;height:8px;background:#222222"></div>
<svg class="a" style="left:40px;top:379px" width="4" height="5"><path d="M0.8 0.5L2.8 2.5L0.8 4.5" fill="none" stroke="#888" stroke-width="0.7"/></svg>
<div class="a" style="left:45px;top:378px;width:7px;height:6px;background:#6d88e8"></div>
<div class="t" style="left:56px;top:379.3px;font-size:6px;color:#a0a0a0">1</div>
<svg class="a" style="left:72px;top:378px" width="6" height="6"><path d="M3 0L3.8 2.1H6L4.2 3.5L4.9 5.8L3 4.4L1.1 5.8L1.8 3.5L0 2.1H2.2Z" fill="#d8d8d8"/></svg>
<div class="a" style="left:80px;top:378px;width:6px;height:6px;border:0.8px solid #cfcfcf"></div><div class="a" style="left:82px;top:380px;width:2px;height:2px;background:#ddd;border-radius:50%"></div>
<div class="t f" style="left:90px;top:379.3px;width:31px;font-size:6.5px;color:#bdbdbd">pinky mask</div>
<svg class="a" style="left:192px;top:378px" width="30" height="7" fill="#bdbdbd"><circle cx="2.8" cy="2" r="1.7"/><path d="M0.3 6.8Q0.5 3.8 2.8 3.8Q5.1 3.8 5.3 6.8Z"/><rect x="0" y="4.3" width="5.6" height="0.7" fill="#2b2b2b"/><circle cx="2.2" cy="1.9" r="0.45" fill="#2b2b2b"/><circle cx="3.4" cy="1.9" r="0.45" fill="#2b2b2b"/><circle cx="11.5" cy="3.5" r="1.5" fill="#555"/><path d="M16 6.5L21 1" stroke="#ccc" stroke-width="0.8"/></svg>
<svg class="a" style="left:265px;top:378px" width="7" height="7"><path d="M5.5 5.8A2.8 2.8 0 1 1 6.3 3.5Q6.3 5 5 5Q4 5 4 3.8A0.9 0.9 0 1 0 3 4.5" fill="none" stroke="#bbb" stroke-width="0.7"/></svg>
<div class="a" style="left:274px;top:377px;width:45px;height:8px;background:#1e1e1e"></div>
<div class="t f" style="left:277px;top:378.6px;width:13px;font-size:6.5px;color:#c8c8c8">None</div>
<svg class="a" style="left:312px;top:380px" width="5" height="3"><path d="M0.5 0.7L2.5 2.3L4.5 0.7" fill="none" stroke="#999" stroke-width="0.6"/></svg>
<div class="a" style="left:1px;top:376px;width:329px;height:1px;background:#262626"></div>
<div class="a" style="left:334px;top:376px;width:546px;height:1px;background:#2a2a2a"></div>
<div class="a" style="left:1px;top:386px;width:329px;height:8px;background:#2c2c2c"></div>
<div class="a" style="left:334px;top:386px;width:546px;height:8px;background:#393939"></div>
<div class="a" style="left:331px;top:386px;width:3px;height:8px;background:#2e2e2e"></div>
<div class="a" style="left:3px;top:386px;width:7px;height:8px;background:#232323"></div>
<div class="a" style="left:11px;top:386px;width:7px;height:8px;background:#232323"></div>
<div class="a" style="left:19px;top:386px;width:7px;height:8px;background:#232323"></div>
<div class="a" style="left:27px;top:386px;width:6px;height:8px;background:#232323"></div>
<div class="a" style="left:231.5px;top:386px;width:6px;height:8px;background:#222222"></div>
<div class="a" style="left:238.5px;top:386px;width:6.5px;height:8px;background:#222222"></div>
<div class="a" style="left:247px;top:386px;width:5.5px;height:8px;background:#222222"></div>
<div class="a" style="left:200px;top:386px;width:6px;height:8px;background:#222222"></div>
<div class="a" style="left:215px;top:386px;width:7px;height:8px;background:#222222"></div>
<svg class="a" style="left:4px;top:388px" width="6" height="4"><path d="M0 2Q3 -1 6 2Q3 5 0 2Z" fill="#c8c8c8"/><circle cx="3" cy="2" r="0.8" fill="#333"/></svg>
<svg class="a" style="left:40px;top:388px" width="4" height="5"><path d="M0.8 0.5L2.8 2.5L0.8 4.5" fill="none" stroke="#888" stroke-width="0.7"/></svg>
<div class="a" style="left:45px;top:387px;width:7px;height:6px;background:#a9a9d6"></div>
<div class="t" style="left:56px;top:388.3px;font-size:6px;color:#a0a0a0">2</div>
<div class="a" style="left:72px;top:387px;width:5px;height:7px;background:#c46a12"></div><div class="a" style="left:73px;top:388px;width:3px;height:5px;background:#2a1a0a"></div><div class="a" style="left:73.5px;top:388.5px;width:2px;height:2px;background:#e08020"></div>
<div class="a" style="left:80px;top:387px;width:6px;height:6px;border:0.8px solid #8a8a8a;background:#3a3a3a"></div>
<div class="t f" style="left:90px;top:388.3px;width:16px;font-size:6.5px;color:#bdbdbd">pinky</div>
<svg class="a" style="left:192px;top:387px" width="30" height="7" fill="#bdbdbd"><circle cx="2.8" cy="2" r="1.7"/><path d="M0.3 6.8Q0.5 3.8 2.8 3.8Q5.1 3.8 5.3 6.8Z"/><rect x="0" y="4.3" width="5.6" height="0.7" fill="#2b2b2b"/><circle cx="2.2" cy="1.9" r="0.45" fill="#2b2b2b"/><circle cx="3.4" cy="1.9" r="0.45" fill="#2b2b2b"/><path d="M16 6.5L21 1" stroke="#ccc" stroke-width="0.8"/><text x="22.5" y="6.8" font-size="7.5" font-style="italic" fill="#c8c8c8" font-family="Liberation Serif">fx</text></svg>
<svg class="a" style="left:265px;top:387px" width="7" height="7"><path d="M5.5 5.8A2.8 2.8 0 1 1 6.3 3.5Q6.3 5 5 5Q4 5 4 3.8A0.9 0.9 0 1 0 3 4.5" fill="none" stroke="#bbb" stroke-width="0.7"/></svg>
<div class="a" style="left:274px;top:386px;width:45px;height:8px;background:#1e1e1e"></div>
<div class="t f" style="left:277px;top:387.6px;width:13px;font-size:6.5px;color:#c8c8c8">None</div>
<svg class="a" style="left:312px;top:389px" width="5" height="3"><path d="M0.5 0.7L2.5 2.3L4.5 0.7" fill="none" stroke="#999" stroke-width="0.6"/></svg>
<div class="a" style="left:1px;top:385px;width:329px;height:1px;background:#262626"></div>
<div class="a" style="left:334px;top:385px;width:546px;height:1px;background:#2a2a2a"></div>
<div class="a" style="left:1px;top:395px;width:329px;height:7px;background:#2c2c2c"></div>
<div class="a" style="left:334px;top:395px;width:546px;height:7px;background:#393939"></div>
<div class="a" style="left:331px;top:395px;width:3px;height:7px;background:#2e2e2e"></div>
<div class="a" style="left:3px;top:395px;width:7px;height:8px;background:#232323"></div>
<div class="a" style="left:11px;top:395px;width:7px;height:8px;background:#232323"></div>
<div class="a" style="left:19px;top:395px;width:7px;height:8px;background:#232323"></div>
<div class="a" style="left:27px;top:395px;width:6px;height:8px;background:#232323"></div>
<div class="a" style="left:231.5px;top:395px;width:6px;height:7px;background:#222222"></div>
<div class="a" style="left:238.5px;top:395px;width:6.5px;height:7px;background:#222222"></div>
<div class="a" style="left:247px;top:395px;width:5.5px;height:7px;background:#222222"></div>
<div class="a" style="left:200px;top:395px;width:6px;height:7px;background:#222222"></div>
<div class="a" style="left:215px;top:395px;width:7px;height:7px;background:#222222"></div>
<svg class="a" style="left:40px;top:397px" width="4" height="5"><path d="M0.8 0.5L2.8 2.5L0.8 4.5" fill="none" stroke="#888" stroke-width="0.7"/></svg>
<div class="a" style="left:45px;top:396px;width:7px;height:6px;background:#6d88e8"></div>
<div class="t" style="left:56px;top:397.3px;font-size:6px;color:#a0a0a0">3</div>
<svg class="a" style="left:72px;top:396px" width="6" height="6"><path d="M3 0L3.8 2.1H6L4.2 3.5L4.9 5.8L3 4.4L1.1 5.8L1.8 3.5L0 2.1H2.2Z" fill="#d8d8d8"/></svg>
<div class="a" style="left:80px;top:396px;width:6px;height:6px;border:0.8px solid #cfcfcf"></div><div class="a" style="left:82px;top:398px;width:2px;height:2px;background:#ddd;border-radius:50%"></div>
<div class="t f" style="left:90px;top:397.3px;width:43.5px;font-size:6.5px;color:#bdbdbd">ring finger mask</div>
<svg class="a" style="left:192px;top:396px" width="30" height="7" fill="#bdbdbd"><circle cx="2.8" cy="2" r="1.7"/><path d="M0.3 6.8Q0.5 3.8 2.8 3.8Q5.1 3.8 5.3 6.8Z"/><rect x="0" y="4.3" width="5.6" height="0.7" fill="#2b2b2b"/><circle cx="2.2" cy="1.9" r="0.45" fill="#2b2b2b"/><circle cx="3.4" cy="1.9" r="0.45" fill="#2b2b2b"/><circle cx="11.5" cy="3.5" r="1.5" fill="#555"/><path d="M16 6.5L21 1" stroke="#ccc" stroke-width="0.8"/></svg>
<svg class="a" style="left:265px;top:396px" width="7" height="7"><path d="M5.5 5.8A2.8 2.8 0 1 1 6.3 3.5Q6.3 5 5 5Q4 5 4 3.8A0.9 0.9 0 1 0 3 4.5" fill="none" stroke="#bbb" stroke-width="0.7"/></svg>
<div class="a" style="left:274px;top:395px;width:45px;height:7px;background:#1e1e1e"></div>
<div class="t f" style="left:277px;top:396.6px;width:13px;font-size:6.5px;color:#c8c8c8">None</div>
<svg class="a" style="left:312px;top:398px" width="5" height="3"><path d="M0.5 0.7L2.5 2.3L4.5 0.7" fill="none" stroke="#999" stroke-width="0.6"/></svg>
<div class="a" style="left:1px;top:394px;width:329px;height:1px;background:#262626"></div>
<div class="a" style="left:334px;top:394px;width:546px;height:1px;background:#2a2a2a"></div>
<div class="a" style="left:1px;top:403px;width:329px;height:8px;background:#474747"></div>
<div class="a" style="left:334px;top:403px;width:546px;height:8px;background:#474747"></div>
<div class="a" style="left:331px;top:403px;width:3px;height:8px;background:#3a3a3a"></div>
<div class="a" style="left:3px;top:403px;width:7px;height:8px;background:#313131"></div>
<div class="a" style="left:11px;top:403px;width:7px;height:8px;background:#313131"></div>
<div class="a" style="left:19px;top:403px;width:7px;height:8px;background:#313131"></div>
<div class="a" style="left:27px;top:403px;width:6px;height:8px;background:#313131"></div>
<div class="a" style="left:231.5px;top:403px;width:6px;height:8px;background:#3c3c3c"></div>
<div class="a" style="left:238.5px;top:403px;width:6.5px;height:8px;background:#3c3c3c"></div>
<div class="a" style="left:247px;top:403px;width:5.5px;height:8px;background:#3c3c3c"></div>
<div class="a" style="left:200px;top:403px;width:6px;height:8px;background:#3c3c3c"></div>
<div class="a" style="left:215px;top:403px;width:7px;height:8px;background:#3c3c3c"></div>
<svg class="a" style="left:4px;top:405px" width="6" height="4"><path d="M0 2Q3 -1 6 2Q3 5 0 2Z" fill="#c8c8c8"/><circle cx="3" cy="2" r="0.8" fill="#333"/></svg>
<svg class="a" style="left:39px;top:406px" width="5" height="4"><path d="M0.5 0.8L2.5 2.8L4.5 0.8" fill="none" stroke="#888" stroke-width="0.7"/></svg>
<div class="a" style="left:45px;top:404px;width:7px;height:6px;background:#a9a9d6"></div>
<div class="t" style="left:56px;top:405.3px;font-size:6px;color:#a0a0a0">4</div>
<div class="a" style="left:72px;top:404px;width:5px;height:7px;background:#c46a12"></div><div class="a" style="left:73px;top:405px;width:3px;height:5px;background:#2a1a0a"></div><div class="a" style="left:73.5px;top:405.5px;width:2px;height:2px;background:#e08020"></div>
<div class="a" style="left:80px;top:404px;width:6px;height:6px;border:0.8px solid #8a8a8a;background:#3a3a3a"></div>
<div class="a" style="left:88px;top:403px;width:101px;height:8px;border:0.8px solid #d0d0d0;background:#333"></div>
<div class="t f" style="left:90px;top:405.3px;width:28px;font-size:6.5px;color:#bdbdbd">ring finger</div>
<svg class="a" style="left:192px;top:404px" width="30" height="7" fill="#bdbdbd"><circle cx="2.8" cy="2" r="1.7"/><path d="M0.3 6.8Q0.5 3.8 2.8 3.8Q5.1 3.8 5.3 6.8Z"/><rect x="0" y="4.3" width="5.6" height="0.7" fill="#2b2b2b"/><circle cx="2.2" cy="1.9" r="0.45" fill="#2b2b2b"/><circle cx="3.4" cy="1.9" r="0.45" fill="#2b2b2b"/><path d="M16 6.5L21 1" stroke="#ccc" stroke-width="0.8"/><text x="22.5" y="6.8" font-size="7.5" font-style="italic" fill="#c8c8c8" font-family="Liberation Serif">fx</text></svg>
<svg class="a" style="left:265px;top:404px" width="7" height="7"><path d="M5.5 5.8A2.8 2.8 0 1 1 6.3 3.5Q6.3 5 5 5Q4 5 4 3.8A0.9 0.9 0 1 0 3 4.5" fill="none" stroke="#bbb" stroke-width="0.7"/></svg>
<div class="a" style="left:274px;top:403px;width:45px;height:8px;background:#1e1e1e"></div>
<div class="t f" style="left:277px;top:404.6px;width:13px;font-size:6.5px;color:#c8c8c8">None</div>
<svg class="a" style="left:312px;top:406px" width="5" height="3"><path d="M0.5 0.7L2.5 2.3L4.5 0.7" fill="none" stroke="#999" stroke-width="0.6"/></svg>
<div class="a" style="left:1px;top:402px;width:329px;height:1px;background:#262626"></div>
<div class="a" style="left:334px;top:402px;width:546px;height:1px;background:#2a2a2a"></div>
<div class="a" style="left:1px;top:412px;width:329px;height:8px;background:#242424"></div>
<div class="a" style="left:334px;top:412px;width:546px;height:8px;background:#353535"></div>
<div class="a" style="left:331px;top:412px;width:3px;height:8px;background:#2a2a2a"></div>
<div class="a" style="left:64px;top:412px;width:126px;height:8px;background:#3b3b3b"></div>
<svg class="a" style="left:57.5px;top:415px" width="5" height="4"><path d="M0.5 0.8L2.5 2.8L4.5 0.8" fill="none" stroke="#888" stroke-width="0.7"/></svg>
<div class="t f" style="left:3.5px;top:412.5px;width:6.5px;font-size:8px;font-style:italic;color:#c0c0c0;font-family:'Liberation Serif',serif">fx</div>
<div class="t f" style="left:192px;top:414.3px;width:16px;font-size:6px;color:#2d8ceb">Reset</div>
<div class="a" style="left:252px;top:418px;width:4px;height:0.8px;background:#2d8ceb"></div>
<div class="t f" style="left:66px;top:414.3px;width:19px;font-size:6.5px;color:#b0b0b0">Puppet</div>
<div class="a" style="left:1px;top:411px;width:329px;height:1px;background:#262626"></div>
<div class="a" style="left:334px;top:411px;width:546px;height:1px;background:#2a2a2a"></div>
<div class="a" style="left:1px;top:421px;width:329px;height:8px;background:#242424"></div>
<div class="a" style="left:334px;top:421px;width:546px;height:8px;background:#353535"></div>
<div class="a" style="left:331px;top:421px;width:3px;height:8px;background:#2a2a2a"></div>
<div class="a" style="left:73px;top:421px;width:117px;height:8px;background:#3b3b3b"></div>
<svg class="a" style="left:66.5px;top:424px" width="5" height="4"><path d="M0.5 0.8L2.5 2.8L4.5 0.8" fill="none" stroke="#888" stroke-width="0.7"/></svg>
<div class="t f" style="left:75px;top:423.3px;width:17px;font-size:6.5px;color:#b0b0b0">Mesh 1</div>
<div class="a" style="left:1px;top:420px;width:329px;height:1px;background:#1e1e1e"></div>
<div class="a" style="left:334px;top:420px;width:546px;height:1px;background:#2a2a2a"></div>
<div class="a" style="left:1px;top:430px;width:329px;height:8px;background:#242424"></div>
<div class="a" style="left:334px;top:430px;width:546px;height:8px;background:#353535"></div>
<div class="a" style="left:331px;top:430px;width:3px;height:8px;background:#2a2a2a"></div>
<svg class="a" style="left:75.5px;top:433px" width="5" height="4"><path d="M0.5 0.8L2.5 2.8L4.5 0.8" fill="none" stroke="#888" stroke-width="0.7"/></svg>
<div class="t f" style="left:83.5px;top:432.3px;width:19px;font-size:6.5px;color:#b0b0b0">Deform</div>
<div class="a" style="left:1px;top:429px;width:329px;height:1px;background:#1e1e1e"></div>
<div class="a" style="left:334px;top:429px;width:546px;height:1px;background:#2a2a2a"></div>
<div class="a" style="left:1px;top:439px;width:329px;height:8px;background:#242424"></div>
<div class="a" style="left:334px;top:439px;width:546px;height:8px;background:#353535"></div>
<div class="a" style="left:331px;top:439px;width:3px;height:8px;background:#2a2a2a"></div>
<svg class="a" style="left:85px;top:442px" width="5" height="4"><path d="M0.5 0.8L2.5 2.8L4.5 0.8" fill="none" stroke="#888" stroke-width="0.7"/></svg>
<div class="t f" style="left:92.5px;top:441.3px;width:33px;font-size:6.5px;color:#b0b0b0">Puppet Pin 4</div>
<div class="a" style="left:1px;top:438px;width:329px;height:1px;background:#1e1e1e"></div>
<div class="a" style="left:334px;top:438px;width:546px;height:1px;background:#2a2a2a"></div>
<div class="a" style="left:1px;top:448px;width:329px;height:8px;background:#242424"></div>
<div class="a" style="left:334px;top:448px;width:546px;height:8px;background:#353535"></div>
<div class="a" style="left:331px;top:448px;width:3px;height:8px;background:#2a2a2a"></div>
<svg class="a" style="left:100px;top:449px" width="16" height="7"><circle cx="2.8" cy="4" r="2.2" fill="none" stroke="#2d8ceb" stroke-width="0.9"/><path d="M2.8 0.5V2M2.8 4V2.5M1.5 0.6H4" stroke="#2d8ceb" stroke-width="0.7"/><path d="M9 0.5V6.5H15M9.5 5L11 3L12.5 4.5L14.5 2" fill="none" stroke="#bbb" stroke-width="0.7"/></svg>
<svg class="a" style="left:4px;top:449px" width="22" height="7"><path d="M3 1L0.5 3.5L3 6Z" fill="#c8c8c8"/><path d="M10 1L12.5 3.5L10 6L7.5 3.5Z" fill="none" stroke="#aaa" stroke-width="0.7"/><path d="M17 1L19.5 3.5L17 6Z" fill="#c8c8c8"/></svg>
<svg class="a" style="left:270px;top:449px" width="7" height="7"><path d="M5.5 5.8A2.8 2.8 0 1 1 6.3 3.5Q6.3 5 5 5Q4 5 4 3.8A0.9 0.9 0 1 0 3 4.5" fill="none" stroke="#bbb" stroke-width="0.7"/></svg>
<div class="t f" style="left:192px;top:450.3px;width:33px;font-size:6.5px;color:#2d8ceb">-363.4 ,558.1</div>
<div class="t f" style="left:120px;top:450.3px;width:20px;font-size:6.5px;color:#b0b0b0">Position</div>
<div class="a" style="left:1px;top:447px;width:329px;height:1px;background:#1e1e1e"></div>
<div class="a" style="left:334px;top:447px;width:546px;height:1px;background:#2a2a2a"></div>
<div class="a" style="left:1px;top:457px;width:329px;height:8px;background:#242424"></div>
<div class="a" style="left:334px;top:457px;width:546px;height:8px;background:#353535"></div>
<div class="a" style="left:331px;top:457px;width:3px;height:8px;background:#2a2a2a"></div>
<svg class="a" style="left:85px;top:460px" width="5" height="4"><path d="M0.5 0.8L2.5 2.8L4.5 0.8" fill="none" stroke="#888" stroke-width="0.7"/></svg>
<div class="t f" style="left:92.5px;top:459.3px;width:33px;font-size:6.5px;color:#b0b0b0">Puppet Pin 3</div>
<div class="a" style="left:1px;top:456px;width:329px;height:1px;background:#1e1e1e"></div>
<div class="a" style="left:334px;top:456px;width:546px;height:1px;background:#2a2a2a"></div>
<div class="a" style="left:1px;top:466px;width:329px;height:7px;background:#242424"></div>
<div class="a" style="left:334px;top:466px;width:546px;height:7px;background:#353535"></div>
<div class="a" style="left:331px;top:466px;width:3px;height:7px;background:#2a2a2a"></div>
<svg class="a" style="left:100px;top:467px" width="16" height="7"><circle cx="2.8" cy="4" r="2.2" fill="none" stroke="#2d8ceb" stroke-width="0.9"/><path d="M2.8 0.5V2M2.8 4V2.5M1.5 0.6H4" stroke="#2d8ceb" stroke-width="0.7"/><path d="M9 0.5V6.5H15M9.5 5L11 3L12.5 4.5L14.5 2" fill="none" stroke="#bbb" stroke-width="0.7"/></svg>
<svg class="a" style="left:4px;top:467px" width="22" height="7"><path d="M3 1L0.5 3.5L3 6Z" fill="#c8c8c8"/><path d="M10 1L12.5 3.5L10 6L7.5 3.5Z" fill="none" stroke="#aaa" stroke-width="0.7"/><path d="M17 1L19.5 3.5L17 6Z" fill="#c8c8c8"/></svg>
<svg class="a" style="left:270px;top:467px" width="7" height="7"><path d="M5.5 5.8A2.8 2.8 0 1 1 6.3 3.5Q6.3 5 5 5Q4 5 4 3.8A0.9 0.9 0 1 0 3 4.5" fill="none" stroke="#bbb" stroke-width="0.7"/></svg>
<div class="t f" style="left:192px;top:468.3px;width:32px;font-size:6.5px;color:#2d8ceb">-190.9 ,535.7</div>
<div class="t f" style="left:120px;top:468.3px;width:20px;font-size:6.5px;color:#b0b0b0">Position</div>
<div class="a" style="left:1px;top:465px;width:329px;height:1px;background:#1e1e1e"></div>
<div class="a" style="left:334px;top:465px;width:546px;height:1px;background:#2a2a2a"></div>
<div class="a" style="left:1px;top:474px;width:329px;height:8px;background:#242424"></div>
<div class="a" style="left:334px;top:474px;width:546px;height:8px;background:#353535"></div>
<div class="a" style="left:331px;top:474px;width:3px;height:8px;background:#2a2a2a"></div>
<svg class="a" style="left:85px;top:477px" width="5" height="4"><path d="M0.5 0.8L2.5 2.8L4.5 0.8" fill="none" stroke="#888" stroke-width="0.7"/></svg>
<div class="t f" style="left:92.5px;top:476.3px;width:33px;font-size:6.5px;color:#b0b0b0">Puppet Pin 2</div>
<div class="a" style="left:1px;top:473px;width:329px;height:1px;background:#1e1e1e"></div>
<div class="a" style="left:334px;top:473px;width:546px;height:1px;background:#2a2a2a"></div>
<div class="a" style="left:1px;top:483px;width:329px;height:8px;background:#242424"></div>
<div class="a" style="left:334px;top:483px;width:546px;height:8px;background:#353535"></div>
<div class="a" style="left:331px;top:483px;width:3px;height:8px;background:#2a2a2a"></div>
<svg class="a" style="left:100px;top:484px" width="16" height="7"><circle cx="2.8" cy="4" r="2.2" fill="none" stroke="#2d8ceb" stroke-width="0.9"/><path d="M2.8 0.5V2M2.8 4V2.5M1.5 0.6H4" stroke="#2d8ceb" stroke-width="0.7"/><path d="M9 0.5V6.5H15M9.5 5L11 3L12.5 4.5L14.5 2" fill="none" stroke="#bbb" stroke-width="0.7"/></svg>
<svg class="a" style="left:4px;top:484px" width="22" height="7"><path d="M3 1L0.5 3.5L3 6Z" fill="#c8c8c8"/><path d="M10 1L12.5 3.5L10 6L7.5 3.5Z" fill="none" stroke="#aaa" stroke-width="0.7"/><path d="M17 1L19.5 3.5L17 6Z" fill="#666"/></svg>
<svg class="a" style="left:270px;top:484px" width="7" height="7"><path d="M5.5 5.8A2.8 2.8 0 1 1 6.3 3.5Q6.3 5 5 5Q4 5 4 3.8A0.9 0.9 0 1 0 3 4.5" fill="none" stroke="#bbb" stroke-width="0.7"/></svg>
<div class="t f" style="left:192px;top:485.3px;width:27px;font-size:6.5px;color:#2d8ceb">-99.3 ,569.1</div>
<div class="t f" style="left:120px;top:485.3px;width:20px;font-size:6.5px;color:#b0b0b0">Position</div>
<div class="a" style="left:1px;top:482px;width:329px;height:1px;background:#1e1e1e"></div>
<div class="a" style="left:334px;top:482px;width:546px;height:1px;background:#2a2a2a"></div>
<div class="a" style="left:1px;top:492px;width:329px;height:8px;background:#242424"></div>
<div class="a" style="left:334px;top:492px;width:546px;height:8px;background:#353535"></div>
<div class="a" style="left:331px;top:492px;width:3px;height:8px;background:#2a2a2a"></div>
<div class="a" style="left:90.5px;top:492px;width:99.5px;height:8px;background:#3b3b3b"></div>
<svg class="a" style="left:85px;top:495px" width="5" height="4"><path d="M0.5 0.8L2.5 2.8L4.5 0.8" fill="none" stroke="#888" stroke-width="0.7"/></svg>
<div class="t f" style="left:92.5px;top:494.3px;width:33px;font-size:6.5px;color:#b0b0b0">Puppet Pin 1</div>
<div class="a" style="left:1px;top:491px;width:329px;height:1px;background:#1e1e1e"></div>
<div class="a" style="left:334px;top:491px;width:546px;height:1px;background:#2a2a2a"></div>
<div class="a" style="left:1px;top:501px;width:329px;height:8px;background:#242424"></div>
<div class="a" style="left:334px;top:501px;width:546px;height:8px;background:#353535"></div>
<div class="a" style="left:331px;top:501px;width:3px;height:8px;background:#2a2a2a"></div>
<svg class="a" style="left:100px;top:502px" width="16" height="7"><circle cx="2.8" cy="4" r="2.2" fill="none" stroke="#2d8ceb" stroke-width="0.9"/><path d="M2.8 0.5V2M2.8 4V2.5M1.5 0.6H4" stroke="#2d8ceb" stroke-width="0.7"/><path d="M9 0.5V6.5H15M9.5 5L11 3L12.5 4.5L14.5 2" fill="none" stroke="#bbb" stroke-width="0.7"/></svg>
<svg class="a" style="left:4px;top:502px" width="22" height="7"><path d="M3 1L0.5 3.5L3 6Z" fill="#c8c8c8"/><path d="M10 1L12.5 3.5L10 6L7.5 3.5Z" fill="none" stroke="#aaa" stroke-width="0.7"/><path d="M17 1L19.5 3.5L17 6Z" fill="#666"/></svg>
<svg class="a" style="left:270px;top:502px" width="7" height="7"><path d="M5.5 5.8A2.8 2.8 0 1 1 6.3 3.5Q6.3 5 5 5Q4 5 4 3.8A0.9 0.9 0 1 0 3 4.5" fill="none" stroke="#bbb" stroke-width="0.7"/></svg>
<div class="t f" style="left:192px;top:503.3px;width:27px;font-size:6.5px;color:#2d8ceb">349.1 ,676.6</div>
<div class="t f" style="left:120px;top:503.3px;width:20px;font-size:6.5px;color:#b0b0b0">Position</div>
<div class="a" style="left:1px;top:500px;width:329px;height:1px;background:#1e1e1e"></div>
<div class="a" style="left:334px;top:500px;width:546px;height:1px;background:#2a2a2a"></div>
<div class="a" style="left:1px;top:510px;width:329px;height:8px;background:#242424"></div>
<div class="a" style="left:334px;top:510px;width:546px;height:8px;background:#353535"></div>
<div class="a" style="left:331px;top:510px;width:3px;height:8px;background:#2a2a2a"></div>
<svg class="a" style="left:66px;top:511px" width="16" height="7"><circle cx="2.8" cy="4" r="2.2" fill="none" stroke="#2d8ceb" stroke-width="0.9"/><path d="M2.8 0.5V2M2.8 4V2.5M1.5 0.6H4" stroke="#2d8ceb" stroke-width="0.7"/><path d="M9 0.5V6.5H15M9.5 5L11 3L12.5 4.5L14.5 2" fill="none" stroke="#bbb" stroke-width="0.7"/></svg>
<svg class="a" style="left:4px;top:511px" width="22" height="7"><path d="M3 1L0.5 3.5L3 6Z" fill="#555"/><path d="M10 1L12.5 3.5L10 6L7.5 3.5Z" fill="none" stroke="#aaa" stroke-width="0.7"/><path d="M17 1L19.5 3.5L17 6Z" fill="#c8c8c8"/></svg>
<svg class="a" style="left:270px;top:511px" width="7" height="7"><path d="M5.5 5.8A2.8 2.8 0 1 1 6.3 3.5Q6.3 5 5 5Q4 5 4 3.8A0.9 0.9 0 1 0 3 4.5" fill="none" stroke="#bbb" stroke-width="0.7"/></svg>
<div class="t f" style="left:192px;top:512.3px;width:35px;font-size:6.5px;color:#2d8ceb">1317.5 ,3294.0</div>
<div class="t f" style="left:84px;top:512.3px;width:20px;font-size:6.5px;color:#b0b0b0">Position</div>
<div class="a" style="left:1px;top:509px;width:329px;height:1px;background:#1e1e1e"></div>
<div class="a" style="left:334px;top:509px;width:546px;height:1px;background:#2a2a2a"></div>
<div class="a" style="left:1px;top:519px;width:329px;height:8px;background:#242424"></div>
<div class="a" style="left:334px;top:519px;width:546px;height:8px;background:#353535"></div>
<div class="a" style="left:331px;top:519px;width:3px;height:8px;background:#2a2a2a"></div>
<svg class="a" style="left:66px;top:520px" width="16" height="7"><circle cx="2.8" cy="4" r="2.2" fill="none" stroke="#2d8ceb" stroke-width="0.9"/><path d="M2.8 0.5V2M2.8 4V2.5M1.5 0.6H4" stroke="#2d8ceb" stroke-width="0.7"/><path d="M9 0.5V6.5H15M9.5 5L11 3L12.5 4.5L14.5 2" fill="none" stroke="#bbb" stroke-width="0.7"/></svg>
<svg class="a" style="left:4px;top:520px" width="22" height="7"><path d="M3 1L0.5 3.5L3 6Z" fill="#c8c8c8"/><path d="M10 1L12.5 3.5L10 6L7.5 3.5Z" fill="none" stroke="#aaa" stroke-width="0.7"/><path d="M17 1L19.5 3.5L17 6Z" fill="#666"/></svg>
<svg class="a" style="left:270px;top:520px" width="7" height="7"><path d="M5.5 5.8A2.8 2.8 0 1 1 6.3 3.5Q6.3 5 5 5Q4 5 4 3.8A0.9 0.9 0 1 0 3 4.5" fill="none" stroke="#bbb" stroke-width="0.7"/></svg>
<div class="t f" style="left:192px;top:521.3px;width:23px;font-size:6.5px;color:#2d8ceb">0 x -95.0 &deg;</div>
<div class="t f" style="left:84px;top:521.3px;width:20px;font-size:6.5px;color:#b0b0b0">Rotation</div>
<div class="a" style="left:1px;top:518px;width:329px;height:1px;background:#1e1e1e"></div>
<div class="a" style="left:334px;top:518px;width:546px;height:1px;background:#2a2a2a"></div>
<div class="a" style="left:1px;top:528px;width:329px;height:8px;background:#2c2c2c"></div>
<div class="a" style="left:334px;top:528px;width:546px;height:8px;background:#393939"></div>
<div class="a" style="left:331px;top:528px;width:3px;height:8px;background:#2e2e2e"></div>
<div class="a" style="left:3px;top:528px;width:7px;height:8px;background:#232323"></div>
<div class="a" style="left:11px;top:528px;width:7px;height:8px;background:#232323"></div>
<div class="a" style="left:19px;top:528px;width:7px;height:8px;background:#232323"></div>
<div class="a" style="left:27px;top:528px;width:6px;height:8px;background:#232323"></div>
<div class="a" style="left:231.5px;top:528px;width:6px;height:8px;background:#222222"></div>
<div class="a" style="left:238.5px;top:528px;width:6.5px;height:8px;background:#222222"></div>
<div class="a" style="left:247px;top:528px;width:5.5px;height:8px;background:#222222"></div>
<div class="a" style="left:200px;top:528px;width:6px;height:8px;background:#222222"></div>
<div class="a" style="left:215px;top:528px;width:7px;height:8px;background:#222222"></div>
<svg class="a" style="left:40px;top:530px" width="4" height="5"><path d="M0.8 0.5L2.8 2.5L0.8 4.5" fill="none" stroke="#888" stroke-width="0.7"/></svg>
<div class="a" style="left:45px;top:529px;width:7px;height:6px;background:#6d88e8"></div>
<div class="t" style="left:56px;top:530.3px;font-size:6px;color:#a0a0a0">5</div>
<svg class="a" style="left:72px;top:529px" width="6" height="6"><path d="M3 0L3.8 2.1H6L4.2 3.5L4.9 5.8L3 4.4L1.1 5.8L1.8 3.5L0 2.1H2.2Z" fill="#d8d8d8"/></svg>
<div class="a" style="left:80px;top:529px;width:6px;height:6px;border:0.8px solid #cfcfcf"></div><div class="a" style="left:82px;top:531px;width:2px;height:2px;background:#ddd;border-radius:50%"></div>
<div class="t f" style="left:90px;top:530.3px;width:52px;font-size:6.5px;color:#bdbdbd">middle finger mask</div>
<svg class="a" style="left:192px;top:529px" width="30" height="7" fill="#bdbdbd"><circle cx="2.8" cy="2" r="1.7"/><path d="M0.3 6.8Q0.5 3.8 2.8 3.8Q5.1 3.8 5.3 6.8Z"/><rect x="0" y="4.3" width="5.6" height="0.7" fill="#2b2b2b"/><circle cx="2.2" cy="1.9" r="0.45" fill="#2b2b2b"/><circle cx="3.4" cy="1.9" r="0.45" fill="#2b2b2b"/><circle cx="11.5" cy="3.5" r="1.5" fill="#555"/><path d="M16 6.5L21 1" stroke="#ccc" stroke-width="0.8"/></svg>
<svg class="a" style="left:265px;top:529px" width="7" height="7"><path d="M5.5 5.8A2.8 2.8 0 1 1 6.3 3.5Q6.3 5 5 5Q4 5 4 3.8A0.9 0.9 0 1 0 3 4.5" fill="none" stroke="#bbb" stroke-width="0.7"/></svg>
<div class="a" style="left:274px;top:528px;width:45px;height:8px;background:#1e1e1e"></div>
<div class="t f" style="left:277px;top:529.6px;width:13px;font-size:6.5px;color:#c8c8c8">None</div>
<svg class="a" style="left:312px;top:531px" width="5" height="3"><path d="M0.5 0.7L2.5 2.3L4.5 0.7" fill="none" stroke="#999" stroke-width="0.6"/></svg>
<div class="a" style="left:1px;top:527px;width:329px;height:1px;background:#262626"></div>
<div class="a" style="left:334px;top:527px;width:546px;height:1px;background:#2a2a2a"></div>
<div class="a" style="left:330px;top:352px;width:1px;height:184px;background:#151515"></div>
<div class="a" style="left:876.5px;top:376px;width:3.5px;height:160px;background:rgba(255,255,255,0.04)"></div>
<div class="a" style="left:880px;top:352px;width:9px;height:184px;background:#232323"></div>
<div class="a" style="left:881.5px;top:386px;width:6px;height:55px;background:#2f2f2f;border-radius:3px"></div>
<div class="a" style="left:360px;top:377px;width:6px;height:7.5px;background:#5d6aa8"></div>
<div class="a" style="left:360px;top:386px;width:516.5px;height:7.5px;background:#79798b"></div>
<div class="a" style="left:350.5px;top:395px;width:11px;height:7.5px;background:#5d6aa8"></div>
<div class="a" style="left:350.5px;top:403px;width:526px;height:7.5px;background:#a2a2ca"></div>
<div class="a" style="left:341px;top:528px;width:15px;height:7.5px;background:#5d6aa8"></div>
<div class="a" style="left:331px;top:352px;width:549px;height:4px;background:#6a6a6a"></div>
<div class="a" style="left:331px;top:352px;width:2.5px;height:4px;background:#2d8ceb;border-radius:2px 0 0 2px"></div>
<div class="a" style="left:877.5px;top:352px;width:2.5px;height:4px;background:#2d8ceb;border-radius:0 2px 2px 0"></div>
<div class="a" style="left:378.5px;top:351px;width:1.5px;height:6px;background:rgba(120,170,230,0.6)"></div>
<div class="t" style="left:331px;top:357.5px;font-size:6px;color:#a8a8a8">0:00s</div>
<div class="a" style="left:334px;top:364px;width:0.6px;height:2px;background:#777"></div>
<div class="t" style="left:365.2px;top:357.5px;font-size:6px;color:#a8a8a8">02s</div>
<div class="a" style="left:370px;top:364px;width:0.6px;height:2px;background:#777"></div>
<div class="t" style="left:401.2px;top:357.5px;font-size:6px;color:#a8a8a8">04s</div>
<div class="a" style="left:406px;top:364px;width:0.6px;height:2px;background:#777"></div>
<div class="t" style="left:437.2px;top:357.5px;font-size:6px;color:#a8a8a8">06s</div>
<div class="a" style="left:442px;top:364px;width:0.6px;height:2px;background:#777"></div>
<div class="t" style="left:473.2px;top:357.5px;font-size:6px;color:#a8a8a8">08s</div>
<div class="a" style="left:478px;top:364px;width:0.6px;height:2px;background:#777"></div>
<div class="t" style="left:509.2px;top:357.5px;font-size:6px;color:#a8a8a8">10s</div>
<div class="a" style="left:514px;top:364px;width:0.6px;height:2px;background:#777"></div>
<div class="t" style="left:545.2px;top:357.5px;font-size:6px;color:#a8a8a8">12s</div>
<div class="a" style="left:550px;top:364px;width:0.6px;height:2px;background:#777"></div>
<div class="t" style="left:581.2px;top:357.5px;font-size:6px;color:#a8a8a8">14s</div>
<div class="a" style="left:586px;top:364px;width:0.6px;height:2px;background:#777"></div>
<div class="t" style="left:617.2px;top:357.5px;font-size:6px;color:#a8a8a8">16s</div>
<div class="a" style="left:622px;top:364px;width:0.6px;height:2px;background:#777"></div>
<div class="t" style="left:653.2px;top:357.5px;font-size:6px;color:#a8a8a8">18s</div>
<div class="a" style="left:658px;top:364px;width:0.6px;height:2px;background:#777"></div>
<div class="t" style="left:689.2px;top:357.5px;font-size:6px;color:#a8a8a8">20s</div>
<div class="a" style="left:694px;top:364px;width:0.6px;height:2px;background:#777"></div>
<div class="t" style="left:725.2px;top:357.5px;font-size:6px;color:#a8a8a8">22s</div>
<div class="a" style="left:730px;top:364px;width:0.6px;height:2px;background:#777"></div>
<div class="t" style="left:761.2px;top:357.5px;font-size:6px;color:#a8a8a8">24s</div>
<div class="a" style="left:766px;top:364px;width:0.6px;height:2px;background:#777"></div>
<div class="t" style="left:797.2px;top:357.5px;font-size:6px;color:#a8a8a8">26s</div>
<div class="a" style="left:802px;top:364px;width:0.6px;height:2px;background:#777"></div>
<div class="t" style="left:833.2px;top:357.5px;font-size:6px;color:#a8a8a8">28s</div>
<div class="a" style="left:838px;top:364px;width:0.6px;height:2px;background:#777"></div>
<div class="t" style="left:869.2px;top:357.5px;font-size:6px;color:#a8a8a8">30s</div>
<div class="a" style="left:874px;top:364px;width:0.6px;height:2px;background:#777"></div>
<div class="a" style="left:331px;top:367px;width:549px;height:7px;background:#6a6a6a"></div>
<div class="a" style="left:331px;top:367px;width:2.5px;height:7px;background:#2d8ceb;border-radius:2px 0 0 2px"></div>
<div class="a" style="left:877px;top:367px;width:3px;height:7px;background:#2d8ceb;border-radius:0 2px 2px 0"></div>
<div class="a" style="left:420px;top:374.6px;width:457px;height:1.8px;background:#1db41d"></div>
<div class="a" style="left:331px;top:374.5px;width:89px;height:1.5px;background:#1e1e1e"></div>
<svg class="a" style="left:881px;top:367px" width="8" height="18"><path d="M1 0.5H7V5L4 7L1 5Z" fill="#d0d0d0"/><path d="M2 11L4 9L6 11M3 10V14H6" fill="none" stroke="#ccc" stroke-width="0.8"/></svg>
<div class="a" style="left:378.5px;top:358px;width:1px;height:178px;background:rgba(80,145,215,0.85)"></div>
<svg class="a" style="left:376px;top:358.5px" width="7" height="8"><path d="M0.3 0.3H6.7V4.3L3.5 7.3L0.3 4.3Z" fill="#2d8ceb"/><path d="M2.8 3.5H4.2L3.5 4.5Z" fill="#1a4a80"/></svg>
<svg class="a" style="left:377px;top:413.5px" width="5" height="6"><path d="M0.7 0.5H4.3M0.7 5.5H4.3M2.5 0.5V5.5" stroke="#c8c8c8" stroke-width="0.9"/></svg>
<svg class="a" style="left:377px;top:422.5px" width="5" height="6"><path d="M0.7 0.5H4.3M0.7 5.5H4.3M2.5 0.5V5.5" stroke="#c8c8c8" stroke-width="0.9"/></svg>
<svg class="a" style="left:377px;top:431.5px" width="5" height="6"><path d="M0.7 0.5H4.3M0.7 5.5H4.3M2.5 0.5V5.5" stroke="#c8c8c8" stroke-width="0.9"/></svg>
<svg class="a" style="left:377px;top:440.5px" width="5" height="6"><path d="M0.7 0.5H4.3M0.7 5.5H4.3M2.5 0.5V5.5" stroke="#c8c8c8" stroke-width="0.9"/></svg>
<svg class="a" style="left:377px;top:458.5px" width="5" height="6"><path d="M0.7 0.5H4.3M0.7 5.5H4.3M2.5 0.5V5.5" stroke="#c8c8c8" stroke-width="0.9"/></svg>
<svg class="a" style="left:377px;top:475.5px" width="5" height="6"><path d="M0.7 0.5H4.3M0.7 5.5H4.3M2.5 0.5V5.5" stroke="#c8c8c8" stroke-width="0.9"/></svg>
<svg class="a" style="left:377px;top:493.5px" width="5" height="6"><path d="M0.7 0.5H4.3M0.7 5.5H4.3M2.5 0.5V5.5" stroke="#c8c8c8" stroke-width="0.9"/></svg>
<svg class="a" style="left:367.0px;top:450.3px" width="5" height="5"><path d="M2.5 0L5 2.5L2.5 5L0 2.5Z" fill="#c8c8c8"/></svg>
<svg class="a" style="left:372.0px;top:450.3px" width="5" height="5"><path d="M2.5 0L5 2.5L2.5 5L0 2.5Z" fill="#c8c8c8"/></svg>
<svg class="a" style="left:377.5px;top:450.3px" width="5" height="5"><path d="M2.5 0L5 2.5L2.5 5L0 2.5Z" fill="#c8c8c8"/></svg>
<svg class="a" style="left:367.0px;top:468.3px" width="5" height="5"><path d="M2.5 0L5 2.5L2.5 5L0 2.5Z" fill="#c8c8c8"/></svg>
<svg class="a" style="left:372.0px;top:468.3px" width="5" height="5"><path d="M2.5 0L5 2.5L2.5 5L0 2.5Z" fill="#c8c8c8"/></svg>
<svg class="a" style="left:377.5px;top:468.3px" width="5" height="5"><path d="M2.5 0L5 2.5L2.5 5L0 2.5Z" fill="#c8c8c8"/></svg>
<svg class="a" style="left:367.0px;top:485.3px" width="5" height="5"><path d="M2.5 0L5 2.5L2.5 5L0 2.5Z" fill="#c8c8c8"/></svg>
<svg class="a" style="left:372.0px;top:485.3px" width="5" height="5"><path d="M2.5 0L5 2.5L2.5 5L0 2.5Z" fill="#c8c8c8"/></svg>
<svg class="a" style="left:367.0px;top:503.3px" width="5" height="5"><path d="M2.5 0L5 2.5L2.5 5L0 2.5Z" fill="#c8c8c8"/></svg>
<svg class="a" style="left:347.5px;top:521.3px" width="5" height="5"><path d="M2.5 0L5 2.5L2.5 5L0 2.5Z" fill="#c8c8c8"/></svg>
<svg class="a" style="left:367.0px;top:521.3px" width="5" height="5"><path d="M2.5 0L5 2.5L2.5 5L0 2.5Z" fill="#c8c8c8"/></svg>
<svg class="a" style="left:386px;top:512.3px" width="5" height="5"><path d="M0 0H2.5L5 2.5L2.5 5H0L2 2.5Z" fill="#c8c8c8"/></svg>
<svg class="a" style="left:417px;top:512.3px" width="6" height="5"><path d="M0.5 0.5H5.5L3.7 2.5L5.5 4.5H0.5L2.3 2.5Z" fill="#c8c8c8"/></svg>
<div class="a" style="left:1px;top:536px;width:888px;height:9px;background:#1f1f1f"></div>
<svg class="a" style="left:0;top:537px" width="400" height="8">
<path d="M4 2H9V7H4Z M6 4H11V7" fill="none" stroke="#2d8ceb" stroke-width="0.8"/>
<path d="M14 5.5Q14 2 17 2Q20 2 20 5" fill="none" stroke="#bbb" stroke-width="0.8"/><rect x="16.5" y="4.5" width="3.5" height="2.5" fill="none" stroke="#bbb" stroke-width="0.7"/>
<path d="M24 2V7M26 2V7M28 2V7M23 4.5H29" stroke="#bbb" stroke-width="0.7"/>
<rect x="190" y="0" width="70" height="8" fill="#2a2a2a"/>
<path d="M332.5 5L334 3.5L335.5 5Z" fill="#bbb"/>
<circle cx="347.5" cy="4.5" r="1.8" fill="none" stroke="#ccc" stroke-width="0.8"/><path d="M349.5 4.5H367" stroke="#3a3a3a" stroke-width="1"/>
<path d="M376 6L378.5 3L380 4.5L381.5 3L384.5 6Z" fill="#ccc"/>
</svg>
<div class="t f" style="left:193px;top:538px;width:64px;font-size:6px;color:#9a9a9a">Toggle Switches / Modes</div>
<!-- /timeline -->
<!-- right -->
<div class="t f" style="left:779px;top:41.5px;width:34px;font-size:6.5px;color:#c0c0c0;">RubberHose2</div>
<svg class="a" style="left:819px;top:41.5px" width="5" height="6"><path d="M0 1H4.5M0 3H4.5M0 5H4.5" stroke="#aaa" stroke-width="0.8"/></svg>
<div class="a" style="left:773px;top:53px;width:115px;height:1px;background:#2a2a2a"></div>
<div class="a" style="left:775px;top:55px;width:1.2px;height:81px;background:#1fb8d0"></div>
<div class="a" style="left:776px;top:55px;width:102px;height:12px;background:#1d4e55"></div>
<div class="t" style="left:782px;top:58px;font-size:6px;color:#1a8c9c">: :</div>
<div class="t f" style="left:789px;top:58px;width:16px;font-size:6.5px;color:#1fc4dc;">BUILD</div>
<div class="t" style="left:808px;top:58px;font-size:6px;color:#1a8c9c">: :</div>
<div class="a" style="left:781px;top:70px;width:96px;height:9px;background:#141414;border-radius:1px"></div>
<div class="t f" style="left:783px;top:71.5px;width:34px;font-size:6.5px;color:#d0d0d0;">Hose Name...</div>
<div class="a" style="left:787px;top:84px;width:90px;height:32px;background:#1b1b1b"></div>
<div class="a" style="left:787px;top:85px;width:84px;height:10px;background:#3e3e3e"></div>
<div class="a" style="left:873px;top:86px;width:3px;height:19px;background:#3a3a3a;border-radius:2px"></div>
<div class="a" style="left:787px;top:96px;width:84px;height:0.8px;background:#2a2a2a"></div>
<div class="a" style="left:787px;top:107px;width:84px;height:0.8px;background:#2a2a2a"></div>
<div class="t f" style="left:790px;top:87.5px;width:34px;font-size:6.5px;color:#8a8a8a;">Shoulder/Wrist</div>
<div class="t f" style="left:790px;top:98.5px;width:24px;font-size:6.5px;color:#9a9a9a;">Hip/Ankle</div>
<div class="t f" style="left:790px;top:109.5px;width:35px;font-size:6.5px;color:#9a9a9a;">Shoulder/Hips</div>
<svg class="a" style="left:780px;top:84px" width="8" height="32" fill="#1fc4dc">
<path d="M1 4.5L4 1.5L7 4.5Z"/><path d="M1 10.5L4 13.5L7 10.5Z"/>
<path d="M4 17.5V23.5M1 20.5H7" stroke="#1fc4dc" stroke-width="1.3"/>
<path d="M1.5 26.5L6.5 31M6.5 26.5L1.5 31" stroke="#1fc4dc" stroke-width="1.1"/>
</svg>
<svg class="a" style="left:778px;top:118px" width="102" height="16">
<rect x="2" y="1" width="31" height="13" fill="#262626"/><rect x="35" y="1" width="31" height="13" fill="#262626"/><rect x="68" y="1" width="31" height="13" fill="#262626"/>
<g stroke="#1fd0e8" stroke-width="1.1" fill="#1fd0e8">
<path d="M5.5 6L19 3.3L28.5 12" fill="none"/><circle cx="5.5" cy="6" r="1.1"/><circle cx="28.5" cy="12" r="1.2"/><path d="M17.5 7.5V11.5M15.5 9.5H19.5" stroke-width="1.2"/>
<path d="M45.5 5Q47 2.8 50 3.5L53 6.5L51.5 9L50.5 13.8L48.5 13.5L48 10L45.5 8Z" stroke="none"/><path d="M55 5.5L55.5 7.5" stroke-width="0.9"/><circle cx="49.5" cy="8.5" r="0.8" fill="#222" stroke="none"/>
<path d="M74 7.5L75.5 6.8L93 12.5L93 13.5L74 10Z" stroke="none"/><path d="M82.5 4.5L80.5 7.5M88.5 6.5L86.5 9.5M95.5 10L93.5 12.5" stroke-width="1.1"/>
</g></svg>
<div class="a" style="left:775px;top:138.5px;width:103px;height:12.5px;background:#4a2626;border-left:1.2px solid #e04040"></div>
<div class="t" style="left:782px;top:142px;font-size:6px;color:#8a3030">: :</div>
<div class="t f" style="left:789px;top:142px;width:16px;font-size:6.5px;color:#e23c3c;">STYLE</div>
<div class="t" style="left:808px;top:142px;font-size:6px;color:#8a3030">: :</div>
<div class="a" style="left:775px;top:153px;width:103px;height:13px;background:#4a3e18;border-left:1.2px solid #e0b020"></div>
<div class="t" style="left:782px;top:156.5px;font-size:6px;color:#8a7320">: :</div>
<div class="t f" style="left:789px;top:156.5px;width:24px;font-size:6.5px;color:#e8b81e;">MANAGE</div>
<div class="t" style="left:816px;top:156.5px;font-size:6px;color:#8a7320">: :</div>
<div class="t f" style="left:898px;top:41.5px;width:9px;font-size:6.5px;color:#c8c8c8;">Info</div>
<svg class="a" style="left:913px;top:41.5px" width="5" height="6"><path d="M0 1H4.5M0 3H4.5M0 5H4.5" stroke="#aaa" stroke-width="0.8"/></svg>
<div class="a" style="left:897px;top:50px;width:21px;height:1px;background:#c8c8c8"></div>
<div class="t f" style="left:930px;top:41.5px;width:15px;font-size:6.5px;color:#8a8a8a;">Audio</div>
<div class="a" style="left:896px;top:61px;width:10px;height:10px;background:#000"></div>
<div class="t f" style="left:909px;top:55px;width:7px;font-size:6px;color:#8a8a8a;">R :</div>
<div class="t f" style="left:909px;top:62px;width:7px;font-size:6px;color:#8a8a8a;">G :</div>
<div class="t f" style="left:909px;top:69px;width:7px;font-size:6px;color:#8a8a8a;">B :</div>
<div class="t f" style="left:909px;top:76px;width:7px;font-size:6px;color:#8a8a8a;">A :</div>
<div class="t f" style="left:919px;top:76px;width:3px;font-size:6px;color:#8a8a8a;">0</div>
<div class="a" style="left:944px;top:56px;width:1px;height:25px;background:#333"></div>
<div class="t f" style="left:957px;top:55px;width:21px;font-size:6px;color:#8a8a8a;">X : 1544</div>
<div class="t f" style="left:957px;top:62px;width:21px;font-size:6px;color:#8a8a8a;">Y : 2104</div>
<svg class="a" style="left:950px;top:66px" width="6" height="6"><path d="M3 0V6M0 3H6" stroke="#aaa" stroke-width="0.8"/></svg>
<div class="a" style="left:895px;top:85px;width:99px;height:1px;background:#333"></div>
<div class="t f" style="left:896px;top:89px;width:26px;font-size:6.5px;color:#a0a0a0;">ring finger</div>
<div class="t f" style="left:896px;top:96px;width:52px;font-size:6.5px;color:#a0a0a0;">Duration: 0:00:29:02</div>
<div class="t f" style="left:896px;top:103px;width:76px;font-size:6.5px;color:#a0a0a0;">In: 0:00:00:23, Out: 0:00:29:24</div>
<div class="t f" style="left:899px;top:119px;width:20px;font-size:6.5px;color:#c0c0c0;">Preview</div>
<svg class="a" style="left:925px;top:119.5px" width="5" height="6"><path d="M0 1H4.5M0 3H4.5M0 5H4.5" stroke="#aaa" stroke-width="0.8"/></svg>
<svg class="a" style="left:912px;top:131px" width="66" height="8" fill="#c8c8c8">
<rect x="3" y="1" width="1" height="6"/><path d="M11 1L5 4L11 7Z"/>
<path d="M24 1L19 4L24 7Z"/><rect x="25" y="1" width="1" height="6"/>
<path d="M30.5 1L35.5 4L30.5 7Z"/>
<rect x="41" y="1" width="1" height="6"/><path d="M43 1L48 4L43 7Z"/>
<path d="M55 1L61 4L55 7Z"/><rect x="62" y="1" width="1" height="6"/>
</svg>
<div class="t f" style="left:891px;top:150px;width:10px;font-size:6.5px;color:#8a8a8a;">sets</div>
<div class="t f" style="left:923px;top:150px;width:23px;font-size:6.5px;color:#c0c0c0;">Libraries</div>
<svg class="a" style="left:951px;top:150.5px" width="5" height="6"><path d="M0 1H4.5M0 3H4.5M0 5H4.5" stroke="#aaa" stroke-width="0.8"/></svg>
<div class="a" style="left:923px;top:157px;width:33px;height:1px;background:#9a9a9a"></div>
<div class="t f" style="left:968px;top:150px;width:10px;font-size:6.5px;color:#8a8a8a;">Cha</div>
<div class="a" style="left:979px;top:148px;width:1px;height:9px;background:#333"></div>
<svg class="a" style="left:990px;top:149px" width="7" height="6"><path d="M0.8 0.8L3 3L0.8 5.2M3.8 0.8L6 3L3.8 5.2" fill="none" stroke="#d0d0d0" stroke-width="1.1"/></svg>
<div class="a" style="left:896px;top:161px;width:98px;height:12px;background:#1b1b1b;border-radius:1px"></div>
<svg class="a" style="left:898px;top:163px" width="8" height="8"><circle cx="3.2" cy="3.2" r="2" fill="none" stroke="#ddd" stroke-width="0.9"/><path d="M4.6 4.6L6.8 6.8" stroke="#ddd" stroke-width="1.1"/></svg>
<div class="t f" style="left:907px;top:164.5px;width:53px;font-size:6px;color:#6a6a6a;font-style:italic">Search Current Library</div>
<svg class="a" style="left:985px;top:165px" width="6" height="4"><path d="M0.5 0.5H5.5L3 3.5Z" fill="#ddd"/></svg>
<div class="a" style="left:896px;top:177px;width:98px;height:10px;background:#1b1b1b;border-radius:1px"></div>
<div class="t f" style="left:904px;top:179px;width:24px;font-size:6px;color:#e8e8e8;font-weight:bold">My Library</div>
<svg class="a" style="left:987px;top:180px" width="6" height="4"><path d="M0.5 0.5H5.5L3 3.5Z" fill="#ddd"/></svg>
<div class="t f" style="left:896px;top:192px;width:35px;font-size:6.5px;color:#d8d8d8;font-weight:bold">View by Type</div>
<svg class="a" style="left:933px;top:194px" width="6" height="4"><path d="M0.5 0.5H5.5L3 3.5Z" fill="#ddd"/></svg>
<svg class="a" style="left:972px;top:191px" width="22" height="8"><g fill="#2d9ceb"><rect x="1" y="0.5" width="3" height="3"/><rect x="5" y="0.5" width="3" height="3"/><rect x="1" y="4.5" width="3" height="3"/><rect x="5" y="4.5" width="3" height="3"/></g><g fill="#bbb"><rect x="13" y="0.5" width="1.3" height="1.3"/><rect x="15" y="0.5" width="6" height="1.3"/><rect x="13" y="3.3" width="1.3" height="1.3"/><rect x="15" y="3.3" width="6" height="1.3"/><rect x="13" y="6" width="1.3" height="1.3"/><rect x="15" y="6" width="6" height="1.3"/></g></svg>
<div class="a" style="left:892px;top:203px;width:108px;height:1px;background:#1a1a1a"></div>
<div class="a" style="left:892px;top:204px;width:99px;height:116px;background:#262626"></div>
<div class="a" style="left:991px;top:204px;width:3px;height:116px;background:#1e1e1e"></div>
<div class="a" style="left:991px;top:295px;width:3px;height:25px;background:#141414"></div>
<svg class="a" style="left:896px;top:210px" width="5" height="4"><path d="M0.5 0.5H4.5L2.5 3.5Z" fill="#ccc"/></svg>
<div class="t f" style="left:902px;top:208.5px;width:23px;font-size:6.5px;color:#d0d0d0;font-weight:bold">Graphics</div>
<div class="a" style="left:897px;top:218px;width:51px;height:40.5px;background:#dedede;border-radius:1.5px"></div>
<div class="a" style="left:897px;top:261.5px;width:51px;height:40.5px;background:#dedede;border-radius:1.5px"></div>
<div class="a" style="left:897px;top:305.5px;width:51px;height:14.5px;background:#dedede;border-radius:1.5px 1px 0 0"></div>
<svg class="a" style="left:897px;top:218px" width="51" height="102">
<defs><linearGradient id="hg" x1="0" y1="0" x2="0" y2="1"><stop offset="0" stop-color="#1a1a1a"/><stop offset="1" stop-color="#bbb"/></linearGradient></defs>
<path d="M10 22L11 40H37L35 28L24 26Z" fill="#cfcfcf"/><path d="M13 26V40M18 27V40M23 28V40M29 29V40M33 30V40" stroke="#bdbdbd" stroke-width="0.6"/>
<ellipse cx="25" cy="10.5" rx="7.5" ry="9.5" fill="#1e1e1e"/><circle cx="27" cy="12" r="1.6" fill="#bbb"/><circle cx="22.5" cy="14.5" r="1.3" fill="#aaa"/><path d="M21 17Q25 20 29 17L28 21L23 21Z" fill="#2a2a2a"/>
<path d="M31 13L36 18L41 23L38 24L33 19Z" fill="#3a3a3a"/>
<path d="M10.5 16L22 23L36.5 29" stroke="#4a4a4a" stroke-width="1.3" fill="none"/>
<path d="M12 19L11 25M14.5 20.5L13.5 27M17 22L16.5 28" stroke="#444" stroke-width="0.9"/>
<ellipse cx="17" cy="37" rx="2.3" ry="2.5" fill="#666"/>
<ellipse cx="24.6" cy="49.5" rx="5" ry="5.5" fill="#1e1e1e"/><circle cx="23" cy="51" r="1" fill="#ddd"/><circle cx="26.5" cy="51" r="1" fill="#ddd"/>
<path d="M20 50V62M29 50V62" stroke="url(#hg)" stroke-width="2" fill="none"/>
<path d="M25 56Q28 60 25 64Q22 68 26 72" stroke="#555" stroke-width="1.8" fill="none"/>
<path d="M16.5 60L15.5 80M37.5 60L38 80" stroke="#888" stroke-width="1.3" fill="none"/><path d="M15 64L18 66M15 70L18 69M15 75L18 77M36 64L39 66M36 70L39 69M36 75L39 77" stroke="#999" stroke-width="0.8"/>
<rect x="19" y="74.5" width="14.7" height="7.5" rx="2" fill="#111"/>
<circle cx="34.3" cy="44.7" r="1" fill="#999"/>
<ellipse cx="17" cy="92" rx="4" ry="3" fill="#222"/><path d="M14 92L12 96M16 94L16 102M20 91Q30 88 38 91M21 93Q31 94 39 98M22 92L30 102" stroke="#444" stroke-width="0.8" fill="none"/>
</svg>
<svg class="a" style="left:896px;top:322px" width="100" height="10"><path d="M1 2H4L5 3H9V8.5H1Z" fill="#cfcfcf"/><g transform="translate(72,1)"><circle cx="3.5" cy="4" r="3" fill="none" stroke="#bbb" stroke-width="0.8"/><circle cx="2.5" cy="4" r="1.3" fill="none" stroke="#bbb" stroke-width="0.6"/><circle cx="4.5" cy="4" r="1.3" fill="none" stroke="#bbb" stroke-width="0.6"/></g><path d="M85.5 2.5H91M87 1.5H89.5M86 3V8.5H90.5V3" fill="#555" stroke="#555" stroke-width="0.7"/></svg>
<div class="t f" style="left:949px;top:324.5px;width:14px;font-size:5.5px;color:#cfcfcf;font-weight:bold">55 MB</div>
<div class="t f" style="left:898px;top:338.5px;width:27px;font-size:6.5px;color:#c0c0c0;">Paragraph</div>
<svg class="a" style="left:931px;top:338.5px" width="5" height="6"><path d="M0 1H4.5M0 3H4.5M0 5H4.5" stroke="#aaa" stroke-width="0.8"/></svg>
<div class="a" style="left:897px;top:345.7px;width:38px;height:1.3px;background:#9a9a9a"></div>
<div class="t f" style="left:947px;top:338.5px;width:13px;font-size:6.5px;color:#8a8a8a;">Align</div>
<div class="a" style="left:895px;top:365px;width:95px;height:0.8px;background:#2e2e2e"></div>
<svg class="a" style="left:894px;top:351px" width="100" height="36" fill="#9a9a9a">
<g><rect x="3" y="2" width="7" height="1"/><rect x="3" y="4" width="5" height="1"/><rect x="3" y="6" width="7" height="1"/><rect x="3" y="8" width="5" height="1"/></g>
<rect x="13.5" y="0.5" width="11" height="10" fill="#151515"/>
<g fill="#2d8ceb"><rect x="15" y="2" width="8" height="1"/><rect x="16" y="4" width="6" height="1"/><rect x="15" y="6" width="8" height="1"/><rect x="16" y="8" width="6" height="1"/></g>
<g><rect x="29" y="2" width="7" height="1"/><rect x="31" y="4" width="5" height="1"/><rect x="29" y="6" width="7" height="1"/><rect x="31" y="8" width="5" height="1"/></g>
<g><rect x="45" y="2" width="7" height="1"/><rect x="45" y="4" width="7" height="1"/><rect x="45" y="6" width="7" height="1"/><rect x="45" y="8" width="5" height="1"/></g>
<g><rect x="58" y="2" width="7" height="1"/><rect x="58" y="4" width="7" height="1"/><rect x="58" y="6" width="7" height="1"/><rect x="59" y="8" width="5" height="1"/></g>
<g><rect x="71" y="2" width="7" height="1"/><rect x="71" y="4" width="7" height="1"/><rect x="71" y="6" width="7" height="1"/><rect x="73" y="8" width="5" height="1"/></g>
<g><rect x="86" y="2" width="7" height="1"/><rect x="86" y="4" width="7" height="1"/><rect x="86" y="6" width="7" height="1"/><rect x="86" y="8" width="7" height="1"/></g>
<g transform="translate(2,15)"><path d="M0 3L2 2V4Z"/><rect x="3" y="0" width="1" height="7"/><rect x="5" y="1" width="4" height="1"/><rect x="5" y="3" width="3" height="1"/><rect x="5" y="5" width="4" height="1"/></g>
<g transform="translate(37,15)"><path d="M0 3L2 2V4Z"/><rect x="3" y="0" width="1" height="7"/><rect x="5" y="1" width="5" height="1"/><rect x="5" y="3" width="5" height="1"/><rect x="5" y="5" width="5" height="1"/></g>
<g transform="translate(74,14)"><rect x="0" y="1" width="6" height="1"/><rect x="0" y="3" width="6" height="1"/><rect x="0" y="5" width="6" height="1"/><path d="M-1 0L1 1L-1 2Z"/></g>
<g transform="translate(2,23)"><rect x="0" y="1" width="5" height="1"/><rect x="0" y="3" width="5" height="1"/><rect x="0" y="5" width="5" height="1"/><rect x="0" y="7" width="5" height="1"/><path d="M6 4L8 3V5Z"/></g>
<g transform="translate(37,23)"><rect x="0" y="1" width="5" height="1"/><rect x="0" y="3" width="5" height="1"/><rect x="0" y="5" width="5" height="1"/><rect x="0" y="7" width="5" height="1"/><path d="M6 4L8 3V5Z"/></g>
<rect x="72" y="23" width="11" height="10" fill="#151515"/>
<path d="M73.5 25.5L76.5 28L73.5 30.5Z" fill="#2d8ceb"/><path d="M77.5 25H81.5V31H80V26.5H78.5Q77 26.5 77 28Q77 29.5 78.5 29.5Z" fill="#2d8ceb"/>
<path d="M86 25H90.5V26.3H89.8V31H88.8V26.3H88.2V31H87.2V29.3Q85.2 29.3 85.2 27.2Q85.2 25 87.2 25Z" fill="#b0b0b0"/><path d="M93.5 26L91 28L93.5 30Z" fill="#b0b0b0"/>
</svg>
<div class="t" style="left:906px;top:367.5px;font-size:6px;color:#2d8ceb;white-space:nowrap">0 <span style="color:#7a7a7a">px</span></div>
<div class="t" style="left:944px;top:367.5px;font-size:6px;color:#2d8ceb;white-space:nowrap">0 <span style="color:#7a7a7a">px</span></div>
<div class="t" style="left:977px;top:367.5px;font-size:6px;color:#2d8ceb;white-space:nowrap">0 <span style="color:#7a7a7a">px</span></div>
<div class="t" style="left:906px;top:375.5px;font-size:6px;color:#2d8ceb;white-space:nowrap">0 <span style="color:#7a7a7a">px</span></div>
<div class="t" style="left:944px;top:375.5px;font-size:6px;color:#2d8ceb;white-space:nowrap">0 <span style="color:#7a7a7a">px</span></div>
<!-- /right -->
<script>
document.querySelectorAll('.f').forEach(function(e){var w=parseFloat(e.style.width);e.style.width='auto';var n=e.getBoundingClientRect().width;e.style.transformOrigin='0 0';e.style.transform='scaleX('+(w/n)+')';});
</script>
</body></html>
